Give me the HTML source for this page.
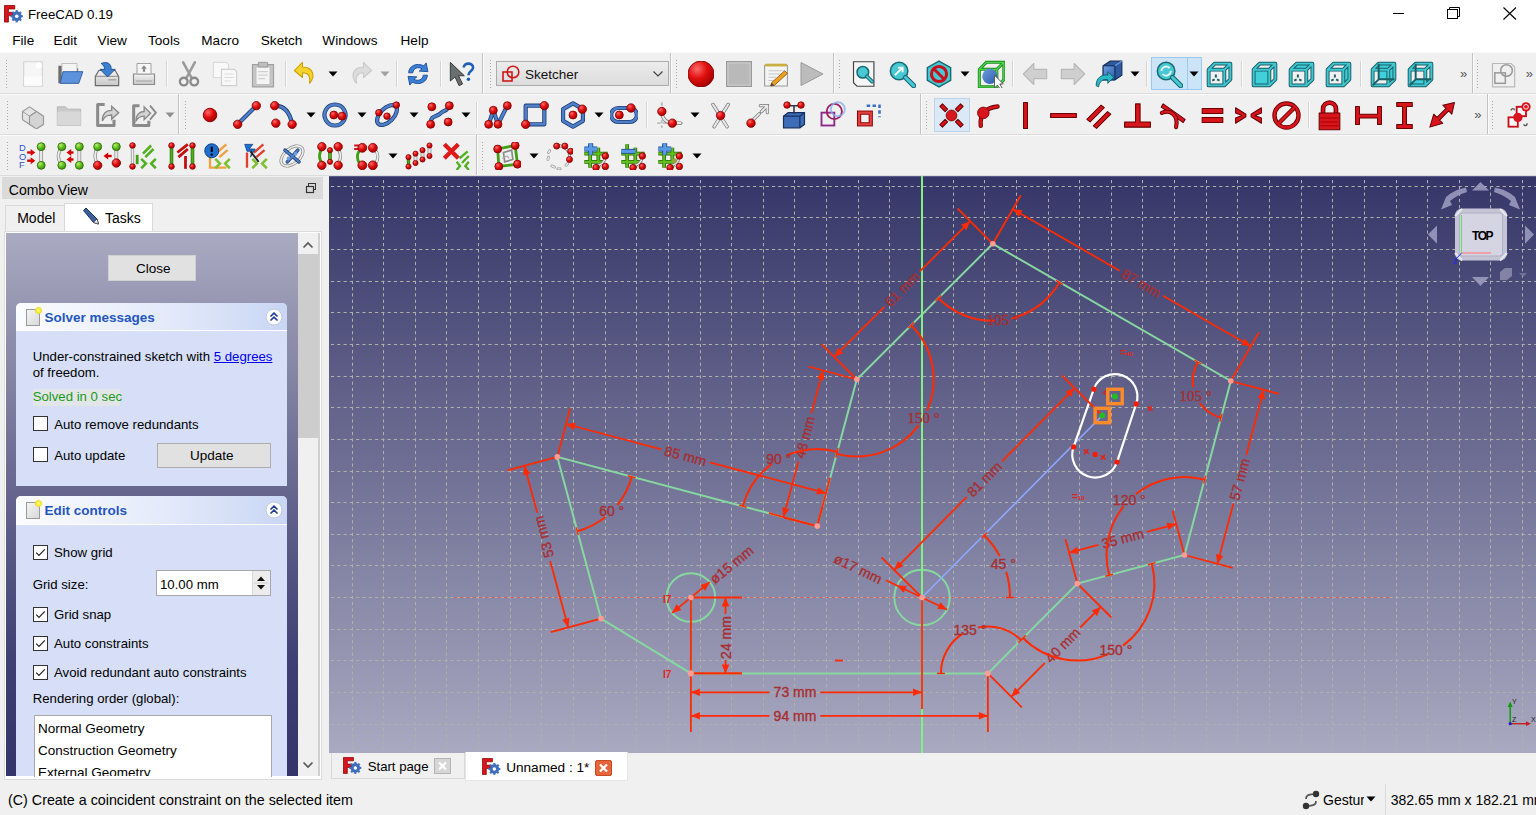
<!DOCTYPE html><html><head><meta charset="utf-8"><style>
*{margin:0;padding:0;box-sizing:border-box}
html,body{width:1536px;height:815px;overflow:hidden;background:#f0f0f0;font-family:"Liberation Sans",sans-serif}
.t{position:absolute;white-space:nowrap}
.ic{position:absolute}
</style></head><body><div style="position:absolute;left:0px;top:0px;width:1536px;height:52px;background:#fff"></div><div class="t" style="left:28px;top:7.94px;font-size:13.3px;line-height:13.3px;color:#000;font-weight:normal;font-family:'Liberation Sans', sans-serif;">FreeCAD 0.19</div><svg class="ic" style="left:4px;top:5px" width="19.6" height="17.6" viewBox="0 0 20 18"><path d="M0.5 0.5H11V4H4.5V7.5H9.5V11H4.5V17.5H0.5Z" fill="#d8141c" stroke="#8a0000" stroke-width="0.8"/><g transform="translate(13 11.5)"><circle r="4.6" fill="#3f6fc0" stroke="#1d3f78" stroke-width="0.6"/><path d="M-1.1 -6.3H1.1V6.3H-1.1Z" fill="#3f6fc0" transform="rotate(0)"/><path d="M-1.1 -6.3H1.1V6.3H-1.1Z" fill="#3f6fc0" transform="rotate(45)"/><path d="M-1.1 -6.3H1.1V6.3H-1.1Z" fill="#3f6fc0" transform="rotate(90)"/><path d="M-1.1 -6.3H1.1V6.3H-1.1Z" fill="#3f6fc0" transform="rotate(135)"/><circle r="1.8" fill="#fff"/></g></svg><div style="position:absolute;left:1393px;top:13px;width:11px;height:1px;background:#000"></div><svg class="ic" style="left:1446px;top:6px" width="15" height="14" viewBox="0 0 15 14"><path d="M3.5 3.5V1.5H13.5V10.5H11.5" fill="none" stroke="#000" stroke-width="1"/><rect x="1.5" y="3.5" width="10" height="9" fill="none" stroke="#000" stroke-width="1"/></svg><svg class="ic" style="left:1503px;top:7px" width="14" height="13" viewBox="0 0 14 13"><path d="M0.5 0.5L13 12.5M13 0.5L0.5 12.5" stroke="#000" stroke-width="1.1"/></svg><div class="t" style="left:12.3px;top:34.09px;font-size:13.6px;line-height:13.6px;color:#000;font-weight:normal;font-family:'Liberation Sans', sans-serif;">File</div><div class="t" style="left:53.6px;top:34.09px;font-size:13.6px;line-height:13.6px;color:#000;font-weight:normal;font-family:'Liberation Sans', sans-serif;">Edit</div><div class="t" style="left:97.6px;top:34.09px;font-size:13.6px;line-height:13.6px;color:#000;font-weight:normal;font-family:'Liberation Sans', sans-serif;">View</div><div class="t" style="left:148px;top:34.09px;font-size:13.6px;line-height:13.6px;color:#000;font-weight:normal;font-family:'Liberation Sans', sans-serif;">Tools</div><div class="t" style="left:201.3px;top:34.09px;font-size:13.6px;line-height:13.6px;color:#000;font-weight:normal;font-family:'Liberation Sans', sans-serif;">Macro</div><div class="t" style="left:260.8px;top:34.09px;font-size:13.6px;line-height:13.6px;color:#000;font-weight:normal;font-family:'Liberation Sans', sans-serif;">Sketch</div><div class="t" style="left:322.3px;top:34.09px;font-size:13.6px;line-height:13.6px;color:#000;font-weight:normal;font-family:'Liberation Sans', sans-serif;">Windows</div><div class="t" style="left:400.5px;top:34.09px;font-size:13.6px;line-height:13.6px;color:#000;font-weight:normal;font-family:'Liberation Sans', sans-serif;">Help</div><svg width="0" height="0" style="position:absolute"><defs>
<radialGradient id="rb" cx="0.35" cy="0.3" r="0.75"><stop offset="0" stop-color="#ff6a6a"/><stop offset="0.5" stop-color="#e01010"/><stop offset="1" stop-color="#a00000"/></radialGradient>
<radialGradient id="gb" cx="0.35" cy="0.3" r="0.75"><stop offset="0" stop-color="#b8f070"/><stop offset="0.5" stop-color="#62c020"/><stop offset="1" stop-color="#3a8a10"/></radialGradient>
<linearGradient id="gry" x1="0" y1="0" x2="0" y2="1"><stop offset="0" stop-color="#f2f2f2"/><stop offset="1" stop-color="#c8c8c8"/></linearGradient>
<linearGradient id="tl" x1="0" y1="0" x2="0" y2="1"><stop offset="0" stop-color="#6ee0e8"/><stop offset="1" stop-color="#22b0bc"/></linearGradient>
<linearGradient id="bl" x1="0" y1="0" x2="1" y2="1"><stop offset="0" stop-color="#6f9ee0"/><stop offset="1" stop-color="#2a5aa8"/></linearGradient>
</defs></svg><div style="position:absolute;left:0px;top:52px;width:1536px;height:124px;background:#f0f0f0"></div><div style="position:absolute;left:0px;top:52px;width:1536px;height:1px;background:#f8f8f8"></div><div style="position:absolute;left:0px;top:93px;width:1536px;height:1px;background:#dcdcdc"></div><div style="position:absolute;left:0px;top:94px;width:1536px;height:1px;background:#fbfbfb"></div><div style="position:absolute;left:0px;top:134px;width:1536px;height:1px;background:#dcdcdc"></div><div style="position:absolute;left:0px;top:135px;width:1536px;height:1px;background:#fbfbfb"></div><div style="position:absolute;left:0px;top:175px;width:1536px;height:1px;background:#dcdcdc"></div><svg class="ic" style="left:5.0px;top:59.0px" width="3" height="30" viewBox="0 0 3 30"><path d="M1.5 1V29" stroke="#a8a8a8" stroke-width="1" stroke-dasharray="1 2"/></svg><svg class="ic" style="left:18.6px;top:60.0px" width="28" height="28" viewBox="0 0 24 24"><path d="M4 1.5H20V22.5H4Z" fill="#f6f6f6" stroke="#d4d4d4" stroke-width="1"/><path d="M4.5 14H19.5V22H4.5Z" fill="#fcfcfc"/><circle cx="17" cy="4.8" r="2.6" fill="#fff"/></svg><svg class="ic" style="left:56.0px;top:60.0px" width="28" height="28" viewBox="0 0 24 24"><path d="M2 5H9L10 7H19V20H2Z" fill="#6e6e6e"/><path d="M5 3H18V14H5Z" fill="#f4f4f4" stroke="#aaa" stroke-width="0.6"/><path d="M3.5 20L6 10H23L19.5 20Z" fill="#5d92dc" stroke="#2f5fa8" stroke-width="0.8"/></svg><svg class="ic" style="left:93.4px;top:60.0px" width="28" height="28" viewBox="0 0 24 24"><path d="M2 14L5 9H19L22 14V22H2Z" fill="url(#gry)" stroke="#6a6a6a" stroke-width="1"/><path d="M2 14H22" stroke="#888" stroke-width="0.8"/><path d="M13 17H20" stroke="#999" stroke-width="1"/><path d="M7 3C12 1 16 3 15.5 8H19L12.5 14.5L6 8H10C10 6 9 4.5 7 3Z" fill="#3d7fd0" stroke="#1f4f90" stroke-width="0.8"/></svg><svg class="ic" style="left:130.2px;top:60.0px" width="28" height="28" viewBox="0 0 24 24"><path d="M3 12H21V21H3Z" fill="url(#gry)" stroke="#8a8a8a" stroke-width="1"/><path d="M6 3H18V12H6Z" fill="#f8f8f8" stroke="#9a9a9a" stroke-width="0.8"/><path d="M12 4.5L9.5 7.5H14.5Z M11 7.5H13V10H11Z" fill="#8a8a8a"/><path d="M5 18H19" stroke="#aaa" stroke-width="1"/></svg><svg class="ic" style="left:174.8px;top:60.0px" width="28" height="28" viewBox="0 0 24 24"><path d="M7 2L14 15M17 2L10 15" stroke="#9a9a9a" stroke-width="2.2" stroke-linecap="round"/><circle cx="7.5" cy="18.5" r="3.3" fill="none" stroke="#8a8a8a" stroke-width="2"/><circle cx="16.5" cy="18.5" r="3.3" fill="none" stroke="#8a8a8a" stroke-width="2"/></svg><svg class="ic" style="left:211.3px;top:60.0px" width="28" height="28" viewBox="0 0 24 24"><path d="M2 2H13L15 4V15H2Z" fill="#f8f8f8" stroke="#dadada" stroke-width="1"/><path d="M9 8H20L22 10V22H9Z" fill="#f8f8f8" stroke="#cfcfcf" stroke-width="1"/><path d="M11.5 12H19.5M11.5 15H19.5M11.5 18H17" stroke="#dcdcdc" stroke-width="1"/></svg><svg class="ic" style="left:249.0px;top:60.0px" width="28" height="28" viewBox="0 0 24 24"><path d="M3 4H21V23H3Z" fill="#c6c6c6" stroke="#a0a0a0" stroke-width="1"/><path d="M6 6H18V21H6Z" fill="#f4f4f4" stroke="#bdbdbd" stroke-width="0.8"/><path d="M8 2H16V6H8Z" fill="#bdbdbd" stroke="#9a9a9a" stroke-width="0.8"/><path d="M8 10H16M8 13H16M8 16H14" stroke="#cfcfcf" stroke-width="1"/></svg><svg class="ic" style="left:292.0px;top:60.0px" width="28" height="28" viewBox="0 0 24 24"><path d="M9 2L2 9L9 15V11C14 11 16 14 15 20C20 15 19 6 9 6Z" fill="#f6d22a" stroke="#c8a000" stroke-width="0.9" stroke-linejoin="round"/></svg><svg class="ic" style="left:345.7px;top:60.0px" width="28" height="28" viewBox="0 0 24 24"><path d="M15 2L22 9L15 15V11C10 11 8 14 9 20C4 15 5 6 15 6Z" fill="#dcdcdc" stroke="#c8c8c8" stroke-width="0.9" stroke-linejoin="round"/></svg><svg class="ic" style="left:404.3px;top:60.0px" width="28" height="28" viewBox="0 0 24 24"><path d="M4 11C4 5 11 2 17 5L19 2.5L20.5 10L13 9.5L15.5 7.5C12 5.5 8 7 7.5 11Z" fill="#3b80d8" stroke="#1d4f98" stroke-width="0.8"/><path d="M20 13C20 19 13 22 7 19L5 21.5L3.5 14L11 14.5L8.5 16.5C12 18.5 16 17 16.5 13Z" fill="#3b80d8" stroke="#1d4f98" stroke-width="0.8"/></svg><svg class="ic" style="left:447.6px;top:60.0px" width="28" height="28" viewBox="0 0 24 24"><path d="M2 2L2 18L6 14.5L9.5 22L12.5 20.5L9 13.5H14Z" fill="#6a7070" stroke="#333" stroke-width="0.8"/><path d="M13.5 6.5C13.5 2 21.5 2 21.5 6.5C21.5 9.5 17.5 9.5 17.5 13" fill="none" stroke="#1f5fb8" stroke-width="2.2"/><circle cx="17.5" cy="16.5" r="1.5" fill="#1f5fb8"/></svg><div style="position:absolute;left:166px;top:61.0px;width:1px;height:26px;background:#d4d4d4"></div><div style="position:absolute;left:167px;top:61.0px;width:1px;height:26px;background:#fbfbfb"></div><div style="position:absolute;left:285px;top:61.0px;width:1px;height:26px;background:#d4d4d4"></div><div style="position:absolute;left:286px;top:61.0px;width:1px;height:26px;background:#fbfbfb"></div><div style="position:absolute;left:396px;top:61.0px;width:1px;height:26px;background:#d4d4d4"></div><div style="position:absolute;left:397px;top:61.0px;width:1px;height:26px;background:#fbfbfb"></div><div style="position:absolute;left:440px;top:61.0px;width:1px;height:26px;background:#d4d4d4"></div><div style="position:absolute;left:441px;top:61.0px;width:1px;height:26px;background:#fbfbfb"></div><svg class="ic" style="left:327.7px;top:71.0px" width="10" height="6" viewBox="0 0 10 6"><path d="M0.5 0.5H9.5L5 5.5Z" fill="#000"/></svg><svg class="ic" style="left:380.0px;top:71.0px" width="10" height="6" viewBox="0 0 10 6"><path d="M0.5 0.5H9.5L5 5.5Z" fill="#a0a0a0"/></svg><div style="position:absolute;left:482px;top:53px;width:1px;height:40px;background:#c2c2c2"></div><div style="position:absolute;left:483px;top:53px;width:1px;height:40px;background:#fcfcfc"></div><svg class="ic" style="left:488.5px;top:59.0px" width="3" height="30" viewBox="0 0 3 30"><path d="M1.5 1V29" stroke="#a8a8a8" stroke-width="1" stroke-dasharray="1 2"/></svg><div style="position:absolute;left:496.3px;top:61.4px;width:172.5px;height:24.5px;background:linear-gradient(#ececec,#dcdcdc);border:1px solid #acacac"></div><svg class="ic" style="left:501px;top:64px" width="20" height="20" viewBox="0 0 20 20"><rect x="2" y="8" width="9" height="9" fill="none" stroke="#d01818" stroke-width="1.6"/><circle cx="12" cy="8" r="5.8" fill="none" stroke="#d01818" stroke-width="1.6"/></svg><div class="t" style="left:525px;top:67.77px;font-size:13.5px;line-height:13.5px;color:#111;font-weight:normal;font-family:'Liberation Sans', sans-serif;">Sketcher</div><svg class="ic" style="left:652px;top:70px" width="12" height="8" viewBox="0 0 12 8"><path d="M1.5 1.5L6 6L10.5 1.5" fill="none" stroke="#444" stroke-width="1.2"/></svg><div style="position:absolute;left:670px;top:53px;width:1px;height:40px;background:#c2c2c2"></div><div style="position:absolute;left:671px;top:53px;width:1px;height:40px;background:#fcfcfc"></div><svg class="ic" style="left:674.5px;top:59.0px" width="3" height="30" viewBox="0 0 3 30"><path d="M1.5 1V29" stroke="#a8a8a8" stroke-width="1" stroke-dasharray="1 2"/></svg><svg class="ic" style="left:688.4px;top:61.0px" width="26" height="26" viewBox="0 0 24 24"><circle cx="12" cy="12" r="12" fill="url(#rb)" stroke="#8a0000" stroke-width="0.8"/></svg><svg class="ic" style="left:725.8px;top:61.0px" width="26" height="26" viewBox="0 0 26 26"><rect x="0.5" y="0.5" width="25" height="25" fill="#b9b9b9" stroke="#9a9a9a" stroke-width="1"/><rect x="2" y="2" width="22" height="22" fill="none" stroke="#cbcbcb" stroke-width="1"/></svg><svg class="ic" style="left:763.2px;top:61.0px" width="26" height="26" viewBox="0 0 24 24"><path d="M1.5 4H22.5V23H1.5Z" fill="#f4f4f4" stroke="#9a9a9a" stroke-width="1"/><path d="M2 2.5H22V5H2Z" fill="#c8b040"/><path d="M5 9H19M5 12H17M5 15H12M5 18H10" stroke="#c8c8c8" stroke-width="1"/><path d="M8 20L20 9L22.5 11.5L10.5 22.5L7 23Z" fill="#f0a020" stroke="#8a5a10" stroke-width="0.8"/><path d="M8 20L7 23L10.5 22.5Z" fill="#444"/></svg><svg class="ic" style="left:799.0px;top:61.0px" width="26" height="26" viewBox="0 0 26 26"><path d="M2 1.5L24 13L2 24.5Z" fill="#bcbcbc" stroke="#9a9a9a" stroke-width="1" stroke-linejoin="round"/></svg><div style="position:absolute;left:833px;top:53px;width:1px;height:40px;background:#c2c2c2"></div><div style="position:absolute;left:834px;top:53px;width:1px;height:40px;background:#fcfcfc"></div><svg class="ic" style="left:838.2px;top:59.0px" width="3" height="30" viewBox="0 0 3 30"><path d="M1.5 1V29" stroke="#a8a8a8" stroke-width="1" stroke-dasharray="1 2"/></svg><svg class="ic" style="left:850.0px;top:60.0px" width="28" height="28" viewBox="0 0 24 24"><path d="M3 1.5H20.5V22.5H6L3 19.5Z" fill="#f6f6f6" stroke="#444" stroke-width="1"/><circle cx="11" cy="10.5" r="5" fill="#47c8d4" stroke="#1a6a72" stroke-width="1.3"/><path d="M14.5 14L19 18.5" stroke="#1a6a72" stroke-width="3.2" stroke-linecap="round"/><path d="M14.5 14L19 18.5" stroke="#47c8d4" stroke-width="1.6" stroke-linecap="round"/></svg><svg class="ic" style="left:887.5px;top:60.0px" width="28" height="28" viewBox="0 0 24 24"><circle cx="9.5" cy="9.5" r="7.5" fill="#47c8d4" stroke="#1a6a72" stroke-width="1.3"/><path d="M15 15L22 22" stroke="#1a6a72" stroke-width="4.5" stroke-linecap="round"/><path d="M15 15L22 22" stroke="#47c8d4" stroke-width="2.6" stroke-linecap="round"/><path d="M6 13L12 7M8.5 6.5H12.5V10.5" fill="none" stroke="#fff" stroke-width="1.6"/></svg><svg class="ic" style="left:925.0px;top:60.0px" width="28" height="28" viewBox="0 0 24 24"><path d="M12 1L22 6.5V17.5L12 23L2 17.5V6.5Z" fill="#47c8d4" stroke="#1a6a72" stroke-width="1.2"/><circle cx="12" cy="12" r="6.5" fill="none" stroke="#c8101a" stroke-width="2.6"/><path d="M7.5 7.5L16.5 16.5" stroke="#c8101a" stroke-width="2.6"/></svg><svg class="ic" style="left:976.7px;top:60.0px" width="28" height="28" viewBox="0 0 24 24"><path d="M2 8L8 2H23V17L17 23H2Z M2 8H17V23 M17 8L23 2" fill="none" stroke="#1d8a1d" stroke-width="2.6"/><path d="M2 8L8 2H23V17L17 23H2Z M2 8H17V23 M17 8L23 2" fill="none" stroke="#4cd24c" stroke-width="1.2"/><circle cx="11" cy="14" r="6.5" fill="url(#bl)"/><path d="M15 13V24L17.5 21.5L20 25L21.5 24L19.5 20.5H22.5Z" fill="#fff" stroke="#555" stroke-width="0.8"/></svg><svg class="ic" style="left:1021.0px;top:60.0px" width="28" height="28" viewBox="0 0 24 24"><path d="M2 12L11 3V8H22V16H11V21Z" fill="#cfcfcf" stroke="#b8b8b8" stroke-width="1" stroke-linejoin="round"/></svg><svg class="ic" style="left:1058.5px;top:60.0px" width="28" height="28" viewBox="0 0 24 24"><path d="M22 12L13 3V8H2V16H13V21Z" fill="#cfcfcf" stroke="#b8b8b8" stroke-width="1" stroke-linejoin="round"/></svg><svg class="ic" style="left:1095.0px;top:60.0px" width="28" height="28" viewBox="0 0 24 24"><path d="M7 5L13 1H23V13L17 17H7Z" fill="#2d5aa0" stroke="#13305e" stroke-width="1"/><path d="M7 5H17V17" fill="none" stroke="#13305e" stroke-width="1"/><path d="M17 5L23 1" stroke="#6a9ae0" stroke-width="1"/><path d="M7 5H17V17H7Z" fill="url(#bl)" stroke="#13305e" stroke-width="0.8"/><path d="M1 22C1 15 6 12 11 13V10L16 15L11 20V17C7 16 4 18 3 23Z" fill="#2ab8c8" stroke="#10606a" stroke-width="0.8"/></svg><svg class="ic" style="left:960.0px;top:71.0px" width="10" height="6" viewBox="0 0 10 6"><path d="M0.5 0.5H9.5L5 5.5Z" fill="#000"/></svg><svg class="ic" style="left:1130.0px;top:71.0px" width="10" height="6" viewBox="0 0 10 6"><path d="M0.5 0.5H9.5L5 5.5Z" fill="#000"/></svg><div style="position:absolute;left:1012px;top:61.0px;width:1px;height:26px;background:#d4d4d4"></div><div style="position:absolute;left:1013px;top:61.0px;width:1px;height:26px;background:#fbfbfb"></div><div style="position:absolute;left:1146px;top:61.0px;width:1px;height:26px;background:#d4d4d4"></div><div style="position:absolute;left:1147px;top:61.0px;width:1px;height:26px;background:#fbfbfb"></div><div style="position:absolute;left:1150.5px;top:57px;width:51.3px;height:33px;background:#cce4f7;border:1px solid #99c9ef"></div><div style="position:absolute;left:1187px;top:57px;width:1px;height:33px;background:#99c9ef"></div><svg class="ic" style="left:1154.8px;top:60.0px" width="28" height="28" viewBox="0 0 24 24"><circle cx="9.5" cy="9.5" r="7.5" fill="#47c8d4" stroke="#1a6a72" stroke-width="1.3"/><path d="M15 15L22 22" stroke="#1a6a72" stroke-width="4.5" stroke-linecap="round"/><path d="M15 15L22 22" stroke="#47c8d4" stroke-width="2.6" stroke-linecap="round"/><path d="M5.5 9.5A4 4 0 0 1 12.5 7M13.5 9.5A4 4 0 0 1 6.5 12" fill="none" stroke="#e8fafa" stroke-width="1.6"/></svg><svg class="ic" style="left:1189.3px;top:71.0px" width="10" height="6" viewBox="0 0 10 6"><path d="M0.5 0.5H9.5L5 5.5Z" fill="#000"/></svg><svg class="ic" style="left:1205.0px;top:59.5px" width="29" height="29" viewBox="0 0 24 24"><path d="M3 8L8 3L21 3L21 16L16 21L3 21Z M3 8L16 8L21 3 M16 8L16 21" fill="none" stroke="#1a5e66" stroke-width="3.2" stroke-linejoin="round"/><path d="M3 8L8 3L21 3L21 16L16 21L3 21Z M3 8L16 8L21 3 M16 8L16 21" fill="none" stroke="#40c8d2" stroke-width="1.6" stroke-linejoin="round"/><path d="M9 12v2.5M6 17l2-1M12 17l-2-1" stroke="#1a5e66" stroke-width="1.6"/></svg><svg class="ic" style="left:1250.0px;top:59.5px" width="29" height="29" viewBox="0 0 24 24"><path d="M3 8L16 8L16 21L3 21Z" fill="#3fd0da"/><path d="M3 8L8 3L21 3L21 16L16 21L3 21Z M3 8L16 8L21 3 M16 8L16 21" fill="none" stroke="#1a5e66" stroke-width="3.2" stroke-linejoin="round"/><path d="M3 8L8 3L21 3L21 16L16 21L3 21Z M3 8L16 8L21 3 M16 8L16 21" fill="none" stroke="#40c8d2" stroke-width="1.6" stroke-linejoin="round"/></svg><svg class="ic" style="left:1286.7px;top:59.5px" width="29" height="29" viewBox="0 0 24 24"><path d="M3 8L8 3L21 3L16 8Z" fill="#3fd0da"/><path d="M3 8L8 3L21 3L21 16L16 21L3 21Z M3 8L16 8L21 3 M16 8L16 21" fill="none" stroke="#1a5e66" stroke-width="3.2" stroke-linejoin="round"/><path d="M3 8L8 3L21 3L21 16L16 21L3 21Z M3 8L16 8L21 3 M16 8L16 21" fill="none" stroke="#40c8d2" stroke-width="1.6" stroke-linejoin="round"/><path d="M9 12v2.5M6 17l2-1M12 17l-2-1" stroke="#1a5e66" stroke-width="1.6"/></svg><svg class="ic" style="left:1324.2px;top:59.5px" width="29" height="29" viewBox="0 0 24 24"><path d="M16 8L21 3L21 16L16 21Z" fill="#3fd0da"/><path d="M3 8L8 3L21 3L21 16L16 21L3 21Z M3 8L16 8L21 3 M16 8L16 21" fill="none" stroke="#1a5e66" stroke-width="3.2" stroke-linejoin="round"/><path d="M3 8L8 3L21 3L21 16L16 21L3 21Z M3 8L16 8L21 3 M16 8L16 21" fill="none" stroke="#40c8d2" stroke-width="1.6" stroke-linejoin="round"/><path d="M9 12v2.5M6 17l2-1M12 17l-2-1" stroke="#1a5e66" stroke-width="1.6"/></svg><svg class="ic" style="left:1368.5px;top:59.5px" width="29" height="29" viewBox="0 0 24 24"><path d="M8 3L21 3L21 16L8 16Z" fill="#3fd0da"/><path d="M3 8L8 3L21 3L21 16L16 21L3 21Z M3 8L16 8L21 3 M16 8L16 21" fill="none" stroke="#1a5e66" stroke-width="3.2" stroke-linejoin="round"/><path d="M3 8L8 3L21 3L21 16L16 21L3 21Z M3 8L16 8L21 3 M16 8L16 21" fill="none" stroke="#40c8d2" stroke-width="1.6" stroke-linejoin="round"/><path d="M8 3L8 16L3 21 M8 16L21 16" fill="none" stroke="#1a5e66" stroke-width="1.6"/></svg><svg class="ic" style="left:1405.9px;top:59.5px" width="29" height="29" viewBox="0 0 24 24"><path d="M3 21L8 16L21 16L16 21Z" fill="#3fd0da"/><path d="M3 8L8 3L21 3L21 16L16 21L3 21Z M3 8L16 8L21 3 M16 8L16 21" fill="none" stroke="#1a5e66" stroke-width="3.2" stroke-linejoin="round"/><path d="M3 8L8 3L21 3L21 16L16 21L3 21Z M3 8L16 8L21 3 M16 8L16 21" fill="none" stroke="#40c8d2" stroke-width="1.6" stroke-linejoin="round"/><path d="M8 3L8 16L3 21 M8 16L21 16" fill="none" stroke="#1a5e66" stroke-width="1.6"/></svg><div style="position:absolute;left:1241px;top:61.0px;width:1px;height:26px;background:#d4d4d4"></div><div style="position:absolute;left:1242px;top:61.0px;width:1px;height:26px;background:#fbfbfb"></div><div style="position:absolute;left:1360px;top:61.0px;width:1px;height:26px;background:#d4d4d4"></div><div style="position:absolute;left:1361px;top:61.0px;width:1px;height:26px;background:#fbfbfb"></div><div class="t" style="left:1460px;top:67.00px;font-size:13px;line-height:13px;color:#555;font-weight:normal;font-family:'Liberation Sans', sans-serif;">»</div><div style="position:absolute;left:1472px;top:53px;width:1px;height:40px;background:#c2c2c2"></div><div style="position:absolute;left:1473px;top:53px;width:1px;height:40px;background:#fcfcfc"></div><svg class="ic" style="left:1475.9px;top:59.0px" width="3" height="30" viewBox="0 0 3 30"><path d="M1.5 1V29" stroke="#a8a8a8" stroke-width="1" stroke-dasharray="1 2"/></svg><svg class="ic" style="left:1489.0px;top:60.0px" width="28" height="28" viewBox="0 0 24 24"><path d="M3 3H19L22 6V23H3Z" fill="#f0f0f0" stroke="#b8b8b8" stroke-width="1"/><rect x="5" y="11" width="9" height="9" fill="none" stroke="#9a9a9a" stroke-width="1.3"/><circle cx="15" cy="9" r="5" fill="none" stroke="#9a9a9a" stroke-width="1.3"/></svg><div class="t" style="left:1525.7px;top:67.00px;font-size:13px;line-height:13px;color:#555;font-weight:normal;font-family:'Liberation Sans', sans-serif;">»</div><svg class="ic" style="left:5.7px;top:100.0px" width="3" height="30" viewBox="0 0 3 30"><path d="M1.5 1V29" stroke="#a8a8a8" stroke-width="1" stroke-dasharray="1 2"/></svg><svg class="ic" style="left:18.6px;top:101.0px" width="28" height="28" viewBox="0 0 24 24"><path d="M3 9L9 5L15 9V16L9 20L3 16Z" fill="#e4e4e4" stroke="#9a9a9a" stroke-width="1"/><path d="M9 13L15 9L21 13V20L15 24L9 20Z" fill="#d4d4d4" stroke="#9a9a9a" stroke-width="1"/><path d="M3 9L9 13V20M9 13L15 9" fill="none" stroke="#9a9a9a" stroke-width="0.8"/></svg><svg class="ic" style="left:55.0px;top:101.0px" width="28" height="28" viewBox="0 0 24 24"><path d="M2 5H9L11 7H22V21H2Z" fill="#cacaca" stroke="#b4b4b4" stroke-width="0.8"/><path d="M2 9H22V21H2Z" fill="#d8d8d8"/></svg><svg class="ic" style="left:92.8px;top:101.0px" width="28" height="28" viewBox="0 0 24 24"><path d="M10 3H4V21H18V16" fill="none" stroke="#8a8a8a" stroke-width="2.6" stroke-linejoin="round"/><path d="M8 17C8 10 12 8 16 8V4.5L22 10L16 15.5V12C12 12 10 13 8 17Z" fill="#d4d4d4" stroke="#8a8a8a" stroke-width="1.2"/></svg><svg class="ic" style="left:129.2px;top:101.0px" width="28" height="28" viewBox="0 0 24 24"><path d="M9 4H4V21H17V17" fill="none" stroke="#8a8a8a" stroke-width="2.6" stroke-linejoin="round"/><path d="M6 17C6 11 10 9 13 9V5L18.5 10.5L13 16V13C10 13 8 14 6 17Z" fill="#d4d4d4" stroke="#8a8a8a" stroke-width="1.2"/><path d="M18 4L23 10L18 16" fill="none" stroke="#8a8a8a" stroke-width="1.6"/></svg><svg class="ic" style="left:165.0px;top:112.0px" width="10" height="6" viewBox="0 0 10 6"><path d="M0.5 0.5H9.5L5 5.5Z" fill="#909090"/></svg><div style="position:absolute;left:178px;top:94px;width:1px;height:40px;background:#c2c2c2"></div><div style="position:absolute;left:179px;top:94px;width:1px;height:40px;background:#fcfcfc"></div><svg class="ic" style="left:183.5px;top:100.0px" width="3" height="30" viewBox="0 0 3 30"><path d="M1.5 1V29" stroke="#a8a8a8" stroke-width="1" stroke-dasharray="1 2"/></svg><svg class="ic" style="left:196.0px;top:101.0px" width="28" height="28" viewBox="0 0 24 24"><circle cx="12" cy="12" r="5.8" fill="url(#rb)" stroke="#8a0000" stroke-width="0.8"/></svg><svg class="ic" style="left:232.7px;top:101.0px" width="28" height="28" viewBox="0 0 24 24"><path d="M4 20L20 4" fill="none" stroke="#1d3f78" stroke-width="3.6" stroke-linecap="round" stroke-linejoin="round"/><path d="M4 20L20 4" fill="none" stroke="#4f7fc8" stroke-width="2.2" stroke-linecap="round" stroke-linejoin="round"/><circle cx="4" cy="20" r="3.6" fill="url(#rb)" stroke="#8a0000" stroke-width="0.7"/><circle cx="20" cy="4" r="3.6" fill="url(#rb)" stroke="#8a0000" stroke-width="0.7"/></svg><svg class="ic" style="left:270.2px;top:101.0px" width="28" height="28" viewBox="0 0 24 24"><path d="M4 4C12 4 17 9 19 20" fill="none" stroke="#1d3f78" stroke-width="3.6" stroke-linecap="round" stroke-linejoin="round"/><path d="M4 4C12 4 17 9 19 20" fill="none" stroke="#4f7fc8" stroke-width="2.2" stroke-linecap="round" stroke-linejoin="round"/><circle cx="4" cy="4" r="3.6" fill="url(#rb)" stroke="#8a0000" stroke-width="0.7"/><circle cx="19" cy="20" r="3.6" fill="url(#rb)" stroke="#8a0000" stroke-width="0.7"/><circle cx="5" cy="19" r="3.6" fill="url(#rb)" stroke="#8a0000" stroke-width="0.7"/></svg><svg class="ic" style="left:321.3px;top:101.0px" width="28" height="28" viewBox="0 0 24 24"><path d="M12 3A9 9 0 1 1 11.99 3Z" fill="none" stroke="#1d3f78" stroke-width="3.6" stroke-linecap="round" stroke-linejoin="round"/><path d="M12 3A9 9 0 1 1 11.99 3Z" fill="none" stroke="#4f7fc8" stroke-width="2.2" stroke-linecap="round" stroke-linejoin="round"/><circle cx="11" cy="12" r="3.4" fill="url(#rb)" stroke="#8a0000" stroke-width="0.7"/><circle cx="18" cy="13" r="3.4" fill="url(#rb)" stroke="#8a0000" stroke-width="0.7"/></svg><svg class="ic" style="left:373.4px;top:101.0px" width="28" height="28" viewBox="0 0 24 24"><g transform="rotate(-45 12 12)"><path d="M1.5 12A10.5 5.8 0 1 0 22.5 12A10.5 5.8 0 1 0 1.5 12Z" fill="none" stroke="#1d3f78" stroke-width="3.6" stroke-linecap="round" stroke-linejoin="round"/><path d="M1.5 12A10.5 5.8 0 1 0 22.5 12A10.5 5.8 0 1 0 1.5 12Z" fill="none" stroke="#4f7fc8" stroke-width="2.2" stroke-linecap="round" stroke-linejoin="round"/></g><circle cx="5" cy="10" r="2.8" fill="url(#rb)" stroke="#8a0000" stroke-width="0.7"/><circle cx="12" cy="13" r="2.8" fill="url(#rb)" stroke="#8a0000" stroke-width="0.7"/><circle cx="20" cy="3.5" r="2.8" fill="url(#rb)" stroke="#8a0000" stroke-width="0.7"/></svg><svg class="ic" style="left:425.5px;top:101.0px" width="28" height="28" viewBox="0 0 24 24"><path d="M4 19C4 12 9 14 12 11C15 8 18 9 20 4" fill="none" stroke="#1d3f78" stroke-width="3.6" stroke-linecap="round" stroke-linejoin="round"/><path d="M4 19C4 12 9 14 12 11C15 8 18 9 20 4" fill="none" stroke="#4f7fc8" stroke-width="2.2" stroke-linecap="round" stroke-linejoin="round"/><circle cx="5" cy="5" r="3.4" fill="url(#rb)" stroke="#8a0000" stroke-width="0.7"/><circle cx="20" cy="4" r="3.4" fill="url(#rb)" stroke="#8a0000" stroke-width="0.7"/><circle cx="4" cy="20" r="3.4" fill="url(#rb)" stroke="#8a0000" stroke-width="0.7"/><circle cx="19" cy="18" r="3.4" fill="url(#rb)" stroke="#8a0000" stroke-width="0.7"/></svg><svg class="ic" style="left:483.9px;top:101.0px" width="28" height="28" viewBox="0 0 24 24"><path d="M4 20L8 8L12 20L20 4" fill="none" stroke="#1d3f78" stroke-width="3.6" stroke-linecap="round" stroke-linejoin="round"/><path d="M4 20L8 8L12 20L20 4" fill="none" stroke="#4f7fc8" stroke-width="2.2" stroke-linecap="round" stroke-linejoin="round"/><circle cx="4" cy="20" r="3.4" fill="url(#rb)" stroke="#8a0000" stroke-width="0.7"/><circle cx="8" cy="8" r="3.4" fill="url(#rb)" stroke="#8a0000" stroke-width="0.7"/><circle cx="12" cy="20" r="3.4" fill="url(#rb)" stroke="#8a0000" stroke-width="0.7"/><circle cx="20" cy="4" r="3.4" fill="url(#rb)" stroke="#8a0000" stroke-width="0.7"/></svg><svg class="ic" style="left:521.3px;top:101.0px" width="28" height="28" viewBox="0 0 24 24"><path d="M4 4H20V20H4Z" fill="none" stroke="#1d3f78" stroke-width="3.6" stroke-linecap="round" stroke-linejoin="round"/><path d="M4 4H20V20H4Z" fill="none" stroke="#4f7fc8" stroke-width="2.2" stroke-linecap="round" stroke-linejoin="round"/><circle cx="4" cy="20" r="3.6" fill="url(#rb)" stroke="#8a0000" stroke-width="0.7"/><circle cx="20" cy="4" r="3.6" fill="url(#rb)" stroke="#8a0000" stroke-width="0.7"/></svg><svg class="ic" style="left:558.8px;top:101.0px" width="28" height="28" viewBox="0 0 24 24"><path d="M12 2L20.5 7V17L12 22L3.5 17V7Z" fill="none" stroke="#1d3f78" stroke-width="3.6" stroke-linecap="round" stroke-linejoin="round"/><path d="M12 2L20.5 7V17L12 22L3.5 17V7Z" fill="none" stroke="#4f7fc8" stroke-width="2.2" stroke-linecap="round" stroke-linejoin="round"/><circle cx="12" cy="12" r="3.4" fill="url(#rb)" stroke="#8a0000" stroke-width="0.7"/><circle cx="20" cy="7" r="3.6" fill="url(#rb)" stroke="#8a0000" stroke-width="0.7"/></svg><svg class="ic" style="left:610.2px;top:101.0px" width="28" height="28" viewBox="0 0 24 24"><path d="M7 6H17A6 6 0 0 1 17 18H7A6 6 0 0 1 7 6Z" fill="none" stroke="#1d3f78" stroke-width="3.6" stroke-linecap="round" stroke-linejoin="round"/><path d="M7 6H17A6 6 0 0 1 17 18H7A6 6 0 0 1 7 6Z" fill="none" stroke="#4f7fc8" stroke-width="2.2" stroke-linecap="round" stroke-linejoin="round"/><circle cx="8" cy="12" r="3.4" fill="url(#rb)" stroke="#8a0000" stroke-width="0.7"/><circle cx="18" cy="6" r="3.6" fill="url(#rb)" stroke="#8a0000" stroke-width="0.7"/></svg><svg class="ic" style="left:655.5px;top:101.0px" width="28" height="28" viewBox="0 0 24 24"><path d="M5 1V23M1 19H23" stroke="#bbb" stroke-width="1.6" stroke-dasharray="3 2"/><path d="M5 9C5 15 9 19 15 19H21" fill="none" stroke="#777" stroke-width="3.0" stroke-linecap="round"/><path d="M5 9C5 15 9 19 15 19H21" fill="none" stroke="#e8e8e8" stroke-width="1.8" stroke-linecap="round"/><circle cx="5" cy="9" r="3.6" fill="url(#rb)" stroke="#8a0000" stroke-width="0.7"/><circle cx="14" cy="19" r="3.6" fill="url(#rb)" stroke="#8a0000" stroke-width="0.7"/></svg><svg class="ic" style="left:706.2px;top:101.0px" width="28" height="28" viewBox="0 0 24 24"><path d="M6 3L18 22M19 3L7 22" fill="none" stroke="#777" stroke-width="3.0" stroke-linecap="round"/><path d="M6 3L18 22M19 3L7 22" fill="none" stroke="#e8e8e8" stroke-width="1.8" stroke-linecap="round"/><circle cx="12.5" cy="12.5" r="3.6" fill="url(#rb)" stroke="#8a0000" stroke-width="0.7"/></svg><svg class="ic" style="left:744.3px;top:101.0px" width="28" height="28" viewBox="0 0 24 24"><path d="M8 16L13 11M15 9L20 4M14 4H20V10" fill="none" stroke="#777" stroke-width="2.8" stroke-linecap="round"/><path d="M8 16L13 11M15 9L20 4M14 4H20V10" fill="none" stroke="#e8e8e8" stroke-width="1.6" stroke-linecap="round"/><circle cx="6" cy="19" r="3.6" fill="url(#rb)" stroke="#8a0000" stroke-width="0.7"/></svg><svg class="ic" style="left:780.1px;top:101.0px" width="28" height="28" viewBox="0 0 24 24"><path d="M3 13L7 10H21V20L17 23H3Z" fill="#3d6db8" stroke="#13305e" stroke-width="1"/><path d="M3 13H17V23M17 13L21 10" fill="none" stroke="#13305e" stroke-width="1"/><path d="M12 4V11M7 4H19" stroke="#334" stroke-width="1.3"/><circle cx="6" cy="3.5" r="2.8" fill="url(#rb)" stroke="#8a0000" stroke-width="0.7"/><circle cx="18" cy="3.5" r="2.8" fill="url(#rb)" stroke="#8a0000" stroke-width="0.7"/></svg><svg class="ic" style="left:817.6px;top:101.0px" width="28" height="28" viewBox="0 0 24 24"><rect x="3" y="10" width="11" height="11" fill="none" stroke="#8a2a8a" stroke-width="1.6"/><circle cx="14" cy="9" r="6.5" fill="none" stroke="#a02060" stroke-width="1.6"/><circle cx="17" cy="7" r="6" fill="none" stroke="#8ab0f0" stroke-width="1.6" opacity="0.8"/></svg><svg class="ic" style="left:855.0px;top:101.0px" width="28" height="28" viewBox="0 0 24 24"><path d="M10 4H21V14" fill="none" stroke="#3a70c8" stroke-width="2.2" stroke-dasharray="3 2"/><rect x="3.5" y="10" width="10" height="10" fill="none" stroke="#8a0000" stroke-width="3.6"/><rect x="3.5" y="10" width="10" height="10" fill="none" stroke="#e04040" stroke-width="2"/></svg><svg class="ic" style="left:305.9px;top:112.0px" width="10" height="6" viewBox="0 0 10 6"><path d="M0.5 0.5H9.5L5 5.5Z" fill="#000"/></svg><svg class="ic" style="left:357.0px;top:112.0px" width="10" height="6" viewBox="0 0 10 6"><path d="M0.5 0.5H9.5L5 5.5Z" fill="#000"/></svg><svg class="ic" style="left:409.0px;top:112.0px" width="10" height="6" viewBox="0 0 10 6"><path d="M0.5 0.5H9.5L5 5.5Z" fill="#000"/></svg><svg class="ic" style="left:461.0px;top:112.0px" width="10" height="6" viewBox="0 0 10 6"><path d="M0.5 0.5H9.5L5 5.5Z" fill="#000"/></svg><svg class="ic" style="left:593.8px;top:112.0px" width="10" height="6" viewBox="0 0 10 6"><path d="M0.5 0.5H9.5L5 5.5Z" fill="#000"/></svg><svg class="ic" style="left:689.8px;top:112.0px" width="10" height="6" viewBox="0 0 10 6"><path d="M0.5 0.5H9.5L5 5.5Z" fill="#000"/></svg><div style="position:absolute;left:476px;top:102.0px;width:1px;height:26px;background:#d4d4d4"></div><div style="position:absolute;left:477px;top:102.0px;width:1px;height:26px;background:#fbfbfb"></div><div style="position:absolute;left:646px;top:102.0px;width:1px;height:26px;background:#d4d4d4"></div><div style="position:absolute;left:647px;top:102.0px;width:1px;height:26px;background:#fbfbfb"></div><div style="position:absolute;left:920px;top:94px;width:1px;height:40px;background:#c2c2c2"></div><div style="position:absolute;left:921px;top:94px;width:1px;height:40px;background:#fcfcfc"></div><svg class="ic" style="left:924.5px;top:100.0px" width="3" height="30" viewBox="0 0 3 30"><path d="M1.5 1V29" stroke="#a8a8a8" stroke-width="1" stroke-dasharray="1 2"/></svg><div style="position:absolute;left:933.5px;top:98px;width:36.5px;height:34px;background:#dbe8f5;border:1px solid #b8d4ee"></div><svg class="ic" style="left:935.5px;top:99.5px" width="31" height="31" viewBox="0 0 24 24"><path d="M3 5L5 3L9 7L7 9Z M21 5L19 3L15 7L17 9Z M3 19L5 21L9 17L7 15Z M21 19L19 21L15 17L17 15Z" fill="#d8141c" stroke="#6a0000" stroke-width="0.8" stroke-linejoin="round"/><circle cx="12" cy="12" r="4.2" fill="#d8141c" stroke="#6a0000" stroke-width="0.6"/></svg><svg class="ic" style="left:972.5px;top:99.5px" width="31" height="31" viewBox="0 0 24 24"><path d="M6 20C5 10 10 6 19 5" fill="none" stroke="#6a0000" stroke-width="3.4" stroke-linecap="round"/><path d="M6 20C5 10 10 6 19 5" fill="none" stroke="#d8141c" stroke-width="2" stroke-linecap="round"/><circle cx="8" cy="10" r="4.5" fill="#d8141c" stroke="#6a0000" stroke-width="0.6"/></svg><svg class="ic" style="left:1010.1px;top:99.5px" width="31" height="31" viewBox="0 0 24 24"><path d="M10.5 2H13.5V22H10.5Z" fill="#d8141c" stroke="#6a0000" stroke-width="0.8" stroke-linejoin="round"/></svg><svg class="ic" style="left:1047.5px;top:99.5px" width="31" height="31" viewBox="0 0 24 24"><path d="M2 10.5H22V13.5H2Z" fill="#d8141c" stroke="#6a0000" stroke-width="0.8" stroke-linejoin="round"/></svg><svg class="ic" style="left:1083.2px;top:99.5px" width="31" height="31" viewBox="0 0 24 24"><path d="M3 15L14 4L16.5 6L5.5 17Z M8 20L19 9L21.5 11L10.5 22Z" fill="#d8141c" stroke="#6a0000" stroke-width="0.8" stroke-linejoin="round"/></svg><svg class="ic" style="left:1121.5px;top:99.5px" width="31" height="31" viewBox="0 0 24 24"><path d="M10.5 3H14V17H22V21H2V17H10.5Z" fill="#d8141c" stroke="#6a0000" stroke-width="0.8" stroke-linejoin="round"/></svg><svg class="ic" style="left:1158.2px;top:99.5px" width="31" height="31" viewBox="0 0 24 24"><path d="M4 3L21 15L19.5 17.5L2.5 5.5Z" fill="#d8141c" stroke="#6a0000" stroke-width="0.8" stroke-linejoin="round"/><path d="M3 10C10 7 16 12 14 21" fill="none" stroke="#6a0000" stroke-width="3.2" stroke-linecap="round"/><path d="M3 10C10 7 16 12 14 21" fill="none" stroke="#d8141c" stroke-width="1.8" stroke-linecap="round"/></svg><svg class="ic" style="left:1196.5px;top:99.5px" width="31" height="31" viewBox="0 0 24 24"><path d="M4 6.5H20V10.5H4Z M4 13.5H20V17.5H4Z" fill="#d8141c" stroke="#6a0000" stroke-width="0.8" stroke-linejoin="round"/></svg><svg class="ic" style="left:1233.2px;top:99.5px" width="31" height="31" viewBox="0 0 24 24"><path d="M2 6L10 11V13L2 18V14L7 12L2 10Z M22 6L14 11V13L22 18V14L17 12L22 10Z" fill="#d8141c" stroke="#6a0000" stroke-width="0.8" stroke-linejoin="round"/></svg><svg class="ic" style="left:1270.7px;top:99.5px" width="31" height="31" viewBox="0 0 24 24"><circle cx="12" cy="12" r="9.3" fill="none" stroke="#6a0000" stroke-width="3.4"/><circle cx="12" cy="12" r="9.3" fill="none" stroke="#d8141c" stroke-width="2"/><path d="M6 18L18 6" stroke="#6a0000" stroke-width="3.4"/><path d="M6 18L18 6" stroke="#d8141c" stroke-width="2"/></svg><svg class="ic" style="left:1313.8px;top:99.5px" width="31" height="31" viewBox="0 0 24 24"><path d="M7 11V7A5 5 0 0 1 17 7V11" fill="none" stroke="#6a0000" stroke-width="3.6"/><path d="M7 11V7A5 5 0 0 1 17 7V11" fill="none" stroke="#d8141c" stroke-width="2"/><path d="M4 10H20V23H4Z" fill="#d8141c" stroke="#6a0000" stroke-width="0.8" stroke-linejoin="round"/><path d="M5 14H19M5 17H19M5 20H19" stroke="#a00" stroke-width="0.8"/></svg><svg class="ic" style="left:1352.5px;top:99.5px" width="31" height="31" viewBox="0 0 24 24"><path d="M2 5H5V11H19V5H22V19H19V14H5V19H2Z" fill="#d8141c" stroke="#6a0000" stroke-width="0.8" stroke-linejoin="round"/></svg><svg class="ic" style="left:1388.8px;top:99.5px" width="31" height="31" viewBox="0 0 24 24"><path d="M6 2H18V5H13.5V19H18V22H6V19H10.5V5H6Z" fill="#d8141c" stroke="#6a0000" stroke-width="0.8" stroke-linejoin="round"/></svg><svg class="ic" style="left:1426.3px;top:99.5px" width="31" height="31" viewBox="0 0 24 24"><path d="M3 21L6 11L8.5 13.5L15.5 6.5L13 4L22 2L20 11L17.5 8.5L10.5 15.5L13 18Z" fill="#d8141c" stroke="#6a0000" stroke-width="0.8" stroke-linejoin="round"/></svg><div style="position:absolute;left:1308px;top:102.0px;width:1px;height:26px;background:#d4d4d4"></div><div style="position:absolute;left:1309px;top:102.0px;width:1px;height:26px;background:#fbfbfb"></div><div class="t" style="left:1474.3px;top:108.00px;font-size:13px;line-height:13px;color:#555;font-weight:normal;font-family:'Liberation Sans', sans-serif;">»</div><div style="position:absolute;left:1487px;top:94px;width:1px;height:40px;background:#c2c2c2"></div><div style="position:absolute;left:1488px;top:94px;width:1px;height:40px;background:#fcfcfc"></div><svg class="ic" style="left:1490.9px;top:100.0px" width="3" height="30" viewBox="0 0 3 30"><path d="M1.5 1V29" stroke="#a8a8a8" stroke-width="1" stroke-dasharray="1 2"/></svg><svg class="ic" style="left:1504.7px;top:101.0px" width="28" height="28" viewBox="0 0 24 24"><path d="M5 8C6 6 8 6 8 8" fill="none" stroke="#555" stroke-width="1.2"/><rect x="10" y="5" width="8" height="8" fill="#fff" stroke="#c8101a" stroke-width="1.6"/><circle cx="18" cy="5" r="4" fill="#d8141c"/><circle cx="18" cy="5" r="2" fill="none" stroke="#fff" stroke-width="0.8"/><rect x="3" y="14" width="8" height="8" fill="#fff" stroke="#c8101a" stroke-width="1.6"/><circle cx="11" cy="14" r="4" fill="#d8141c"/><path d="M16 20C17 22 19 21 19 19" fill="none" stroke="#555" stroke-width="1.2"/></svg><svg class="ic" style="left:5.5px;top:140.5px" width="3" height="30" viewBox="0 0 3 30"><path d="M1.5 1V29" stroke="#a8a8a8" stroke-width="1" stroke-dasharray="1 2"/></svg><svg class="ic" style="left:18.8px;top:141.5px" width="28" height="28" viewBox="0 0 24 24"><text x="0" y="7.5" font-family="Liberation Sans" font-size="8" fill="#3050d0">D</text><text x="0" y="15" font-family="Liberation Sans" font-size="8" fill="#3050d0">O</text><text x="0" y="22.5" font-family="Liberation Sans" font-size="8" fill="#3050d0">F</text><path d="M7 9H11" stroke="#c00" stroke-width="2"/><path d="M14 9L10 6V12Z" fill="#d00"/><path d="M7 16H11" stroke="#c00" stroke-width="2"/><path d="M14 16L10 13V19Z" fill="#d00"/><path d="M19 5V19" stroke="#888" stroke-width="3.2"/><path d="M19 5V19" stroke="#e8e8e8" stroke-width="2"/><circle cx="19" cy="4" r="3.4" fill="url(#gb)" stroke="#2a6a00" stroke-width="0.7"/><circle cx="19" cy="20" r="3.4" fill="url(#gb)" stroke="#2a6a00" stroke-width="0.7"/></svg><svg class="ic" style="left:56.3px;top:141.5px" width="28" height="28" viewBox="0 0 24 24"><path d="M5 5C1 9 1 15 5 19" fill="none" stroke="#888" stroke-width="2.8"/><path d="M5 5C1 9 1 15 5 19" fill="none" stroke="#eee" stroke-width="1.6"/><path d="M20 5V19" stroke="#888" stroke-width="3.2"/><path d="M20 5V19" stroke="#e8e8e8" stroke-width="2"/><path d="M15 9H12" stroke="#c00" stroke-width="2"/><path d="M9 9L13 6V12Z" fill="#d00"/><path d="M15 15H12" stroke="#c00" stroke-width="2"/><path d="M9 15L13 12V18Z" fill="#d00"/><circle cx="5" cy="4" r="3.4" fill="url(#gb)" stroke="#2a6a00" stroke-width="0.7"/><circle cx="5" cy="20" r="3.4" fill="url(#gb)" stroke="#2a6a00" stroke-width="0.7"/><circle cx="20" cy="4" r="3.4" fill="url(#gb)" stroke="#2a6a00" stroke-width="0.7"/><circle cx="20" cy="20" r="3.4" fill="url(#gb)" stroke="#2a6a00" stroke-width="0.7"/></svg><svg class="ic" style="left:92.6px;top:141.5px" width="28" height="28" viewBox="0 0 24 24"><path d="M4 5C1 9 1 15 4 19" fill="none" stroke="#888" stroke-width="2.8"/><path d="M4 5C1 9 1 15 4 19" fill="none" stroke="#eee" stroke-width="1.6"/><path d="M20 5V18" stroke="#888" stroke-width="3.2"/><path d="M20 5V18" stroke="#e8e8e8" stroke-width="2"/><path d="M16 12H12" stroke="#c00" stroke-width="2"/><path d="M9 12L13 9V15Z" fill="#d00"/><circle cx="4" cy="4" r="3.4" fill="url(#gb)" stroke="#2a6a00" stroke-width="0.7"/><circle cx="4" cy="20" r="3.6" fill="url(#rb)" stroke="#8a0000" stroke-width="0.7"/><circle cx="20" cy="4" r="3.4" fill="url(#gb)" stroke="#2a6a00" stroke-width="0.7"/><circle cx="20" cy="18" r="3.6" fill="url(#rb)" stroke="#8a0000" stroke-width="0.7"/></svg><svg class="ic" style="left:129.4px;top:141.5px" width="28" height="28" viewBox="0 0 24 24"><path d="M3 3V21" stroke="#888" stroke-width="2.8"/><path d="M3 3V21" stroke="#eee" stroke-width="1.6"/><circle cx="3" cy="3" r="2.4" fill="url(#rb)" stroke="#8a0000" stroke-width="0.7"/><circle cx="3" cy="21" r="2.4" fill="url(#rb)" stroke="#8a0000" stroke-width="0.7"/><path d="M7 11V19" stroke="#40a010" stroke-width="2.4"/><path d="M12 10L19 3M14 13L21 6" stroke="#50b020" stroke-width="2.2"/><path d="M10.5 14.5L14.5 18.5L10.5 22.5M23 14.5L19 18.5L23 22.5" fill="none" stroke="#50b020" stroke-width="2.2"/></svg><svg class="ic" style="left:167.6px;top:141.5px" width="28" height="28" viewBox="0 0 24 24"><path d="M3 3V21" stroke="#2a6a00" stroke-width="3.0"/><path d="M3 3V21" stroke="#50b020" stroke-width="1.8"/><circle cx="3" cy="3" r="2.4" fill="url(#rb)" stroke="#8a0000" stroke-width="0.7"/><circle cx="3" cy="21" r="2.4" fill="url(#rb)" stroke="#8a0000" stroke-width="0.7"/><path d="M21 3V21" stroke="#2a6a00" stroke-width="3.0"/><path d="M21 3V21" stroke="#50b020" stroke-width="1.8"/><circle cx="21" cy="3" r="2.4" fill="url(#rb)" stroke="#8a0000" stroke-width="0.7"/><circle cx="21" cy="21" r="2.4" fill="url(#rb)" stroke="#8a0000" stroke-width="0.7"/><path d="M8 9L17 2M9 13L17 6" stroke="#c01010" stroke-width="2.4"/><path d="M15 12V23" stroke="#c01010" stroke-width="2.4"/></svg><svg class="ic" style="left:202.8px;top:141.5px" width="28" height="28" viewBox="0 0 24 24"><path d="M6 10V22H20M12 9L20 2M14 13L21 7" fill="none" stroke="#f0a040" stroke-width="2"/><path d="M10.5 14.5L14.5 18.5L10.5 22.5M23 14.5L19 18.5L23 22.5" fill="none" stroke="#80c030" stroke-width="2.2"/><circle cx="7.5" cy="7.5" r="6" fill="#1f6fd0" stroke="#0a3a80" stroke-width="0.8"/><path d="M7.5 4V8.5" stroke="#000" stroke-width="1.8"/><circle cx="7.5" cy="10.8" r="1" fill="#000"/></svg><svg class="ic" style="left:240.3px;top:141.5px" width="28" height="28" viewBox="0 0 24 24"><path d="M6 9V22M12 9L20 2M14 13L21 7" fill="none" stroke="#e04030" stroke-width="2"/><path d="M10.5 14.5L14.5 18.5L10.5 22.5M23 14.5L19 18.5L23 22.5" fill="none" stroke="#80c030" stroke-width="2.2"/><path d="M4 2L11 2L8 6L13 6L9 13L10 8L6 8Z" fill="#1f6fd0" stroke="#0a3a80" stroke-width="0.6"/><path d="M9 8L16 17" stroke="#222" stroke-width="1.6"/></svg><svg class="ic" style="left:277.8px;top:141.5px" width="28" height="28" viewBox="0 0 24 24"><g transform="rotate(-40 12 12)"><ellipse cx="12" cy="12" rx="11" ry="6.5" fill="none" stroke="#888" stroke-width="2.6"/><ellipse cx="12" cy="12" rx="11" ry="6.5" fill="none" stroke="#eee" stroke-width="1.4"/></g><path d="M6 7L18 17M8 17L17 7" fill="none" stroke="#1d3f78" stroke-width="3.0" stroke-linecap="round" stroke-linejoin="round"/><path d="M6 7L18 17M8 17L17 7" fill="none" stroke="#4f7fc8" stroke-width="1.6" stroke-linecap="round" stroke-linejoin="round"/><circle cx="9" cy="14" r="1.6" fill="#6fa0e0"/><circle cx="15" cy="10" r="1.6" fill="#6fa0e0"/></svg><svg class="ic" style="left:316.4px;top:141.5px" width="28" height="28" viewBox="0 0 24 24"><path d="M6 5C2 9 2 15 6 19" fill="none" stroke="#40a010" stroke-width="2.4"/><path d="M18 5C22 9 22 15 18 19" fill="none" stroke="#888" stroke-width="2.6"/><path d="M18 5C22 9 22 15 18 19" fill="none" stroke="#eee" stroke-width="1.4"/><path d="M12 8V16" stroke="#2a6a00" stroke-width="3.0"/><path d="M12 8V16" stroke="#50b020" stroke-width="1.8"/><circle cx="5" cy="4" r="3.6" fill="url(#rb)" stroke="#8a0000" stroke-width="0.7"/><circle cx="5" cy="20" r="3.6" fill="url(#rb)" stroke="#8a0000" stroke-width="0.7"/><circle cx="19" cy="4" r="3.6" fill="url(#rb)" stroke="#8a0000" stroke-width="0.7"/><circle cx="19" cy="20" r="3.6" fill="url(#rb)" stroke="#8a0000" stroke-width="0.7"/><circle cx="12" cy="7" r="2.2" fill="url(#rb)" stroke="#8a0000" stroke-width="0.7"/><circle cx="12" cy="17" r="2.2" fill="url(#rb)" stroke="#8a0000" stroke-width="0.7"/></svg><svg class="ic" style="left:352.5px;top:141.5px" width="28" height="28" viewBox="0 0 24 24"><path d="M1 3H6M1 6H6" stroke="#d01020" stroke-width="1.8"/><path d="M6 7C3 10 3 15 6 19" fill="none" stroke="#40a010" stroke-width="2.4"/><path d="M19 7C22 10 22 15 19 19" fill="none" stroke="#888" stroke-width="2.6"/><path d="M19 7C22 10 22 15 19 19" fill="none" stroke="#eee" stroke-width="1.4"/><circle cx="8" cy="5" r="3.8" fill="url(#rb)" stroke="#8a0000" stroke-width="0.7"/><circle cx="8" cy="20" r="3.8" fill="url(#rb)" stroke="#8a0000" stroke-width="0.7"/><circle cx="17" cy="5" r="3.8" fill="url(#rb)" stroke="#8a0000" stroke-width="0.7"/><circle cx="17" cy="20" r="3.8" fill="url(#rb)" stroke="#8a0000" stroke-width="0.7"/></svg><svg class="ic" style="left:404.5px;top:141.5px" width="28" height="28" viewBox="0 0 24 24"><path d="M3 13V21" stroke="#2a6a00" stroke-width="2.8"/><path d="M3 13V21" stroke="#50b020" stroke-width="1.6"/><circle cx="3" cy="13" r="2.2" fill="url(#rb)" stroke="#8a0000" stroke-width="0.7"/><circle cx="3" cy="21" r="2.2" fill="url(#rb)" stroke="#8a0000" stroke-width="0.7"/><path d="M9 10V18" stroke="#888" stroke-width="3.2"/><path d="M9 10V18" stroke="#e8e8e8" stroke-width="2"/><circle cx="9" cy="10" r="2.2" fill="url(#rb)" stroke="#8a0000" stroke-width="0.7"/><circle cx="9" cy="18" r="2.2" fill="url(#rb)" stroke="#8a0000" stroke-width="0.7"/><path d="M15 7V15" stroke="#888" stroke-width="3.2"/><path d="M15 7V15" stroke="#e8e8e8" stroke-width="2"/><circle cx="15" cy="7" r="2.2" fill="url(#rb)" stroke="#8a0000" stroke-width="0.7"/><circle cx="15" cy="15" r="2.2" fill="url(#rb)" stroke="#8a0000" stroke-width="0.7"/><path d="M21 3V12" stroke="#888" stroke-width="3.2"/><path d="M21 3V12" stroke="#e8e8e8" stroke-width="2"/><circle cx="21" cy="3" r="2.2" fill="url(#rb)" stroke="#8a0000" stroke-width="0.7"/><circle cx="21" cy="12" r="2.2" fill="url(#rb)" stroke="#8a0000" stroke-width="0.7"/></svg><svg class="ic" style="left:442.3px;top:141.5px" width="28" height="28" viewBox="0 0 24 24"><path d="M2 2L14 14M14 2L2 14" stroke="#e01818" stroke-width="3.6"/><path d="M15 14L22 8M17 18L23 12M12.5 17L15.5 20.5L12.5 24M23 17L20 20.5L23 24" fill="none" stroke="#50b020" stroke-width="2"/></svg><svg class="ic" style="left:388.3px;top:152.5px" width="10" height="6" viewBox="0 0 10 6"><path d="M0.5 0.5H9.5L5 5.5Z" fill="#000"/></svg><div style="position:absolute;left:476px;top:135px;width:1px;height:40px;background:#c2c2c2"></div><div style="position:absolute;left:477px;top:135px;width:1px;height:40px;background:#fcfcfc"></div><svg class="ic" style="left:480.8px;top:140.5px" width="3" height="30" viewBox="0 0 3 30"><path d="M1.5 1V29" stroke="#a8a8a8" stroke-width="1" stroke-dasharray="1 2"/></svg><svg class="ic" style="left:493.0px;top:141.5px" width="28" height="28" viewBox="0 0 24 24"><path d="M4 6L19 3L21 19L5 21Z" fill="none" stroke="#40a010" stroke-width="2.4"/><path d="M9 9L16 7L17 15L10 17Z" fill="#f0f0f0" stroke="#888" stroke-width="1.4"/><path d="M8 14L12 12L14 14" fill="none" stroke="#aaa" stroke-width="1"/><circle cx="4" cy="6" r="3.4" fill="url(#rb)" stroke="#8a0000" stroke-width="0.7"/><circle cx="19" cy="3" r="3.4" fill="url(#rb)" stroke="#8a0000" stroke-width="0.7"/><circle cx="21" cy="19" r="3.4" fill="url(#rb)" stroke="#8a0000" stroke-width="0.7"/><circle cx="5" cy="21" r="3.4" fill="url(#rb)" stroke="#8a0000" stroke-width="0.7"/></svg><svg class="ic" style="left:545.2px;top:141.5px" width="28" height="28" viewBox="0 0 24 24"><g fill="none" stroke="#999" stroke-width="2.4" stroke-linecap="round"><path d="M3 9L4 7.5M2.5 15L3 13M6 20.5L8 21.5M11 23H13M18 20L19.5 18.5"/></g><g fill="none" stroke="#eee" stroke-width="1.2" stroke-linecap="round"><path d="M3 9L4 7.5M2.5 15L3 13M6 20.5L8 21.5M11 23H13M18 20L19.5 18.5"/></g><path d="M10 3C17 3 22 8 21 14" fill="none" stroke="#777" stroke-width="2.4" stroke-linecap="round"/><path d="M10 3C17 3 22 8 21 14" fill="none" stroke="#e8e8e8" stroke-width="1.2" stroke-linecap="round"/><circle cx="10" cy="3.5" r="2.6" fill="url(#rb)" stroke="#8a0000" stroke-width="0.7"/><circle cx="17" cy="3.5" r="2.6" fill="url(#rb)" stroke="#8a0000" stroke-width="0.7"/><circle cx="22" cy="8" r="2.6" fill="url(#rb)" stroke="#8a0000" stroke-width="0.7"/><circle cx="21" cy="15" r="2.6" fill="url(#rb)" stroke="#8a0000" stroke-width="0.7"/></svg><svg class="ic" style="left:581.6px;top:141.5px" width="28" height="28" viewBox="0 0 24 24"><path d="M7 2V22M14 5V22M2 10H22M2 17H18" stroke="#2a6a00" stroke-width="3.2"/><path d="M7 2V22M14 5V22M2 10H22M2 17H18" stroke="#60c020" stroke-width="1.8"/><path d="M12 20C16 20 19 18 20 13" fill="none" stroke="#777" stroke-width="2.4" stroke-linecap="round"/><path d="M12 20C16 20 19 18 20 13" fill="none" stroke="#e8e8e8" stroke-width="1.2" stroke-linecap="round"/><path d="M2 6H13M7.5 1V11" stroke="#1a4a90" stroke-width="4.2"/><path d="M2 6H13M7.5 1V11" stroke="#5a9ae8" stroke-width="2.8"/><circle cx="20" cy="12" r="2.8" fill="url(#rb)" stroke="#8a0000" stroke-width="0.7"/><circle cx="20" cy="21" r="2.8" fill="url(#rb)" stroke="#8a0000" stroke-width="0.7"/><circle cx="12" cy="22" r="2.8" fill="url(#rb)" stroke="#8a0000" stroke-width="0.7"/></svg><svg class="ic" style="left:619.4px;top:141.5px" width="28" height="28" viewBox="0 0 24 24"><path d="M7 2V22M14 5V22M2 10H22M2 17H18" stroke="#2a6a00" stroke-width="3.2"/><path d="M7 2V22M14 5V22M2 10H22M2 17H18" stroke="#60c020" stroke-width="1.8"/><path d="M12 20C16 20 19 18 20 13" fill="none" stroke="#777" stroke-width="2.4" stroke-linecap="round"/><path d="M12 20C16 20 19 18 20 13" fill="none" stroke="#e8e8e8" stroke-width="1.2" stroke-linecap="round"/><path d="M2 8H14" stroke="#1a4a90" stroke-width="4.2"/><path d="M2 8H14" stroke="#5a9ae8" stroke-width="2.8"/><circle cx="20" cy="12" r="2.8" fill="url(#rb)" stroke="#8a0000" stroke-width="0.7"/><circle cx="20" cy="21" r="2.8" fill="url(#rb)" stroke="#8a0000" stroke-width="0.7"/><circle cx="12" cy="22" r="2.8" fill="url(#rb)" stroke="#8a0000" stroke-width="0.7"/></svg><svg class="ic" style="left:655.8px;top:141.5px" width="28" height="28" viewBox="0 0 24 24"><path d="M7 2V22M14 5V22M2 10H22M2 17H18" stroke="#2a6a00" stroke-width="3.2"/><path d="M7 2V22M14 5V22M2 10H22M2 17H18" stroke="#60c020" stroke-width="1.8"/><path d="M12 20C16 20 19 18 20 13" fill="none" stroke="#777" stroke-width="2.4" stroke-linecap="round"/><path d="M12 20C16 20 19 18 20 13" fill="none" stroke="#e8e8e8" stroke-width="1.2" stroke-linecap="round"/><path d="M2 6H13M7.5 1V11" stroke="#1a4a90" stroke-width="4.2"/><path d="M2 6H13M7.5 1V11" stroke="#5a9ae8" stroke-width="2.8"/><circle cx="20" cy="12" r="2.8" fill="url(#rb)" stroke="#8a0000" stroke-width="0.7"/><circle cx="20" cy="21" r="2.8" fill="url(#rb)" stroke="#8a0000" stroke-width="0.7"/><circle cx="12" cy="22" r="2.8" fill="url(#rb)" stroke="#8a0000" stroke-width="0.7"/><circle cx="16" cy="16" r="2" fill="#a0a040"/></svg><svg class="ic" style="left:529.4px;top:152.5px" width="10" height="6" viewBox="0 0 10 6"><path d="M0.5 0.5H9.5L5 5.5Z" fill="#000"/></svg><svg class="ic" style="left:692.2px;top:152.5px" width="10" height="6" viewBox="0 0 10 6"><path d="M0.5 0.5H9.5L5 5.5Z" fill="#000"/></svg><div style="position:absolute;left:2px;top:177px;width:321px;height:22px;background:#dadada"></div><div class="t" style="left:8.8px;top:183.45px;font-size:14px;line-height:14px;color:#000;font-weight:normal;font-family:'Liberation Sans', sans-serif;">Combo View</div><svg class="ic" style="left:305px;top:182px" width="12" height="12" viewBox="0 0 12 12"><rect x="3.5" y="1.5" width="7" height="6" fill="none" stroke="#333" stroke-width="1"/><rect x="1.5" y="4.5" width="7" height="6" fill="#dadada" stroke="#333" stroke-width="1.2"/></svg><div style="position:absolute;left:5px;top:205px;width:60px;height:26px;background:#f0f0f0;border:1px solid #d9d9d9;border-bottom:none"></div><div style="position:absolute;left:64px;top:203px;width:89px;height:29px;background:#fff;border:1px solid #d9d9d9;border-bottom:none"></div><div class="t" style="left:17.2px;top:211.45px;font-size:14px;line-height:14px;color:#000;font-weight:normal;font-family:'Liberation Sans', sans-serif;">Model</div><div class="t" style="left:104.9px;top:211.45px;font-size:14px;line-height:14px;color:#000;font-weight:normal;font-family:'Liberation Sans', sans-serif;">Tasks</div><svg class="ic" style="left:81px;top:206px" width="20" height="20" viewBox="0 0 20 20"><path d="M2.5 4.5L5 2L16 13L17.5 18L12.5 16.5Z" fill="#3a5f9a" stroke="#1d3560" stroke-width="1"/><path d="M12.5 16.5L16 13L17.5 18Z" fill="#eee" stroke="#333" stroke-width="0.6"/></svg><div style="position:absolute;left:4px;top:231px;width:318px;height:549px;background:#fff;border:1px solid #dcdcdc"></div><div style="position:absolute;left:6px;top:233px;width:292px;height:543px;background:linear-gradient(#aaaac2 0%,#8d8dab 20%,#62628c 50%,#3e3e72 80%,#34346a 100%)"></div><div style="position:absolute;left:298px;top:233px;width:20px;height:543px;background:#f0f0f0"></div><div style="position:absolute;left:298px;top:254px;width:20px;height:184px;background:#cdcdcd"></div><svg class="ic" style="left:300px;top:238px" width="16" height="14" viewBox="0 0 16 14"><path d="M3.5 9.5L8 5L12.5 9.5" fill="none" stroke="#555" stroke-width="1.6"/></svg><svg class="ic" style="left:300px;top:758px" width="16" height="14" viewBox="0 0 16 14"><path d="M3.5 4.5L8 9L12.5 4.5" fill="none" stroke="#555" stroke-width="1.6"/></svg><div style="position:absolute;left:318px;top:233px;width:2px;height:543px;background:#d0d0d0"></div><div style="position:absolute;left:108px;top:255px;width:88px;height:26px;background:#e1e1e1;border:1px solid #d0d0d0"></div><div class="t" style="left:136px;top:261.97px;font-size:13.5px;line-height:13.5px;color:#000;font-weight:normal;font-family:'Liberation Sans', sans-serif;">Close</div><div style="position:absolute;left:16px;top:303px;width:271px;height:183px;background:#d6dff7;border-radius:5px 5px 0 0"></div><div style="position:absolute;left:16px;top:303px;width:271px;height:28px;background:linear-gradient(90deg,#fbfcff 0%,#e4eafa 55%,#c9d6f4 100%);border-radius:5px 5px 0 0;border-bottom:1px solid #fff"></div><div style="position:absolute;left:25.5px;top:308.5px;width:14px;height:17px;background:linear-gradient(135deg,#f4f4f4,#d8d8d8);border:1px solid #9a9a9a"></div><div style="position:absolute;left:35px;top:306.5px;width:7px;height:7px;border-radius:50%;background:radial-gradient(#ffff80,#f0e020 60%,rgba(240,230,0,0) 100%)"></div><div class="t" style="left:44.5px;top:311.27px;font-size:13.5px;line-height:13.5px;color:#2456c2;font-weight:bold;font-family:'Liberation Sans', sans-serif;">Solver messages</div><svg class="ic" style="left:265px;top:308px" width="18" height="18" viewBox="0 0 18 18"><circle cx="9" cy="9" r="8" fill="#fff" stroke="#c0c8e0" stroke-width="1"/><path d="M5.5 8.5L9 5.2L12.5 8.5M5.5 12.5L9 9.2L12.5 12.5" fill="none" stroke="#1a3c9a" stroke-width="1.6"/></svg><div class="t" style="left:32.7px;top:349.63px;font-size:13.2px;line-height:13.2px;color:#000;font-weight:normal;font-family:'Liberation Sans', sans-serif;">Under-constrained sketch with <span style="color:#0000ee;text-decoration:underline">5 degrees</span></div><div class="t" style="left:32.7px;top:365.93px;font-size:13.2px;line-height:13.2px;color:#000;font-weight:normal;font-family:'Liberation Sans', sans-serif;">of freedom.</div><div style="position:absolute;left:32.7px;top:389px;width:87.3px;height:17px;background:#e3e6e8"></div><div class="t" style="left:32.7px;top:390.43px;font-size:13.2px;line-height:13.2px;color:#1a9a1a;font-weight:normal;font-family:'Liberation Sans', sans-serif;">Solved in 0 sec</div><div style="position:absolute;left:33px;top:415.5px;width:15px;height:15px;background:#fff;border:1px solid #333"></div><div class="t" style="left:54.2px;top:417.73px;font-size:13.2px;line-height:13.2px;color:#000;font-weight:normal;font-family:'Liberation Sans', sans-serif;">Auto remove redundants</div><div style="position:absolute;left:33px;top:446.7px;width:15px;height:15px;background:#fff;border:1px solid #333"></div><div class="t" style="left:54.2px;top:449.03px;font-size:13.2px;line-height:13.2px;color:#000;font-weight:normal;font-family:'Liberation Sans', sans-serif;">Auto update</div><div style="position:absolute;left:157px;top:443px;width:114px;height:25px;background:#e1e1e1;border:1px solid #adadad"></div><div class="t" style="left:190px;top:449.07px;font-size:13.5px;line-height:13.5px;color:#000;font-weight:normal;font-family:'Liberation Sans', sans-serif;">Update</div><div style="position:absolute;left:16px;top:496px;width:271px;height:280px;background:#d6dff7;border-radius:5px 5px 0 0"></div><div style="position:absolute;left:16px;top:496px;width:271px;height:29px;background:linear-gradient(90deg,#fbfcff 0%,#e4eafa 55%,#c9d6f4 100%);border-radius:5px 5px 0 0;border-bottom:1px solid #fff"></div><div style="position:absolute;left:25.5px;top:501.5px;width:14px;height:17px;background:linear-gradient(135deg,#f4f4f4,#d8d8d8);border:1px solid #9a9a9a"></div><div style="position:absolute;left:35px;top:499.5px;width:7px;height:7px;border-radius:50%;background:radial-gradient(#ffff80,#f0e020 60%,rgba(240,230,0,0) 100%)"></div><div class="t" style="left:44.5px;top:504.27px;font-size:13.5px;line-height:13.5px;color:#2456c2;font-weight:bold;font-family:'Liberation Sans', sans-serif;">Edit controls</div><svg class="ic" style="left:265px;top:501px" width="18" height="18" viewBox="0 0 18 18"><circle cx="9" cy="9" r="8" fill="#fff" stroke="#c0c8e0" stroke-width="1"/><path d="M5.5 8.5L9 5.2L12.5 8.5M5.5 12.5L9 9.2L12.5 12.5" fill="none" stroke="#1a3c9a" stroke-width="1.6"/></svg><div style="position:absolute;left:33px;top:544.5px;width:15px;height:15px;background:#fff;border:1px solid #333"></div><svg class="ic" style="left:33px;top:544.5px" width="15" height="15" viewBox="0 0 15 15"><path d="M3.2 7.6L6 10.4L11.8 4.4" fill="none" stroke="#222" stroke-width="1.2"/></svg><div class="t" style="left:54px;top:545.83px;font-size:13.2px;line-height:13.2px;color:#000;font-weight:normal;font-family:'Liberation Sans', sans-serif;">Show grid</div><div class="t" style="left:32.7px;top:577.53px;font-size:13.2px;line-height:13.2px;color:#000;font-weight:normal;font-family:'Liberation Sans', sans-serif;">Grid size:</div><div style="position:absolute;left:156px;top:570px;width:115px;height:26px;background:#fff;border:1px solid #a8a8a8"></div><div style="position:absolute;left:252px;top:571px;width:18px;height:24px;background:#ececec;border-left:1px solid #d8d8d8"></div><svg class="ic" style="left:253px;top:572px" width="16" height="22" viewBox="0 0 16 22"><path d="M4 9L8 4.5L12 9Z M4 13L8 17.5L12 13Z" fill="#111"/><line x1="1" y1="11" x2="15" y2="11" stroke="#d0d0d0"/></svg><div class="t" style="left:160px;top:578.03px;font-size:13.2px;line-height:13.2px;color:#000;font-weight:normal;font-family:'Liberation Sans', sans-serif;">10.00 mm</div><div style="position:absolute;left:33px;top:607px;width:15px;height:15px;background:#fff;border:1px solid #333"></div><svg class="ic" style="left:33px;top:607px" width="15" height="15" viewBox="0 0 15 15"><path d="M3.2 7.6L6 10.4L11.8 4.4" fill="none" stroke="#222" stroke-width="1.2"/></svg><div class="t" style="left:54px;top:608.43px;font-size:13.2px;line-height:13.2px;color:#000;font-weight:normal;font-family:'Liberation Sans', sans-serif;">Grid snap</div><div style="position:absolute;left:33px;top:636px;width:15px;height:15px;background:#fff;border:1px solid #333"></div><svg class="ic" style="left:33px;top:636px" width="15" height="15" viewBox="0 0 15 15"><path d="M3.2 7.6L6 10.4L11.8 4.4" fill="none" stroke="#222" stroke-width="1.2"/></svg><div class="t" style="left:54px;top:637.13px;font-size:13.2px;line-height:13.2px;color:#000;font-weight:normal;font-family:'Liberation Sans', sans-serif;">Auto constraints</div><div style="position:absolute;left:33px;top:664.5px;width:15px;height:15px;background:#fff;border:1px solid #333"></div><svg class="ic" style="left:33px;top:664.5px" width="15" height="15" viewBox="0 0 15 15"><path d="M3.2 7.6L6 10.4L11.8 4.4" fill="none" stroke="#222" stroke-width="1.2"/></svg><div class="t" style="left:54px;top:665.83px;font-size:13.2px;line-height:13.2px;color:#000;font-weight:normal;font-family:'Liberation Sans', sans-serif;">Avoid redundant auto constraints</div><div class="t" style="left:32.7px;top:692.33px;font-size:13.2px;line-height:13.2px;color:#000;font-weight:normal;font-family:'Liberation Sans', sans-serif;">Rendering order (global):</div><div style="position:absolute;left:33.5px;top:714.5px;width:238px;height:62px;background:#fff;border:1px solid #a8a8a8;border-bottom:none"></div><div style="position:absolute;left:34px;top:716px;width:236px;height:60px;overflow:hidden"><div class="t" style="left:4px;top:6.07px;font-size:13.5px;line-height:13.5px;color:#000;font-weight:normal;font-family:'Liberation Sans', sans-serif;">Normal Geometry</div><div class="t" style="left:4px;top:28.07px;font-size:13.5px;line-height:13.5px;color:#000;font-weight:normal;font-family:'Liberation Sans', sans-serif;">Construction Geometry</div><div class="t" style="left:4px;top:50.07px;font-size:13.5px;line-height:13.5px;color:#000;font-weight:normal;font-family:'Liberation Sans', sans-serif;">External Geometry</div></div><svg class="ic" style="left:329px;top:176px" width="1207" height="577" viewBox="329 176 1207 577"><defs><linearGradient id="vbg" x1="0" y1="0" x2="0" y2="1"><stop offset="0" stop-color="#353568"/><stop offset="1" stop-color="#a9a9c1"/></linearGradient></defs><rect x="329" y="176" width="1207" height="577" fill="url(#vbg)"/><rect x="329" y="176" width="1207" height="1" fill="#5c5c8a"/><path d="M352.5 178V753M383.5 178V753M415.5 178V753M446.5 178V753M478.5 178V753M510.5 178V753M541.5 178V753M573.5 178V753M605.5 178V753M636.5 178V753M668.5 178V753M700.5 178V753M731.5 178V753M763.5 178V753M794.5 178V753M826.5 178V753M858.5 178V753M889.5 178V753M921.5 178V753M953.5 178V753M984.5 178V753M1016.5 178V753M1048.5 178V753M1079.5 178V753M1111.5 178V753M1142.5 178V753M1174.5 178V753M1206.5 178V753M1237.5 178V753M1269.5 178V753M1301.5 178V753M1332.5 178V753M1364.5 178V753M1396.5 178V753M1427.5 178V753M1459.5 178V753M1490.5 178V753M1522.5 178V753" stroke="#b0b0aa" stroke-width="1" stroke-dasharray="3.2 3.1" stroke-dashoffset="4.3" fill="none"/><path d="M329 186.5H1536M329 217.5H1536M329 249.5H1536M329 281.5H1536M329 312.5H1536M329 344.5H1536M329 376.5H1536M329 407.5H1536M329 439.5H1536M329 471.5H1536M329 502.5H1536M329 534.5H1536M329 565.5H1536M329 597.5H1536M329 629.5H1536M329 660.5H1536M329 692.5H1536M329 724.5H1536" stroke="#b0b0aa" stroke-width="1" stroke-dasharray="3.2 3.1" stroke-dashoffset="4.4" fill="none"/><line x1="452" y1="597.5" x2="1391" y2="597.5" stroke="#dc5c5c" stroke-width="1" stroke-dasharray="3.2 3.1" stroke-dashoffset="4.55"/><path d="M992.8 243.8 L856.8 379.5 L817.2 526.1 L557.3 456.9 L601.0 618.6 L690.9 673.4 L987.9 673.4 L1077.4 583.6 L1184.5 555.0 L1230.8 381.0 L992.8 243.8" fill="none" stroke="#86d8a0" stroke-width="2"/><circle cx="690.9" cy="597.5" r="24.3" fill="none" stroke="#86d8a0" stroke-width="2"/><circle cx="922" cy="597.5" r="27.7" fill="none" stroke="#86d8a0" stroke-width="2"/><line x1="922" y1="597.5" x2="1102.3" y2="415.5" stroke="#8fa8ff" stroke-width="1.6"/><path d="M1093.8 389.2A22.4 22.4 0 0 1 1136.2 403.9L1117 462.1A22.4 22.4 0 0 1 1073.6 446.9Z" fill="none" stroke="#fff" stroke-width="2.2"/><line x1="922" y1="176" x2="922" y2="753" stroke="#80f080" stroke-width="2"/><line x1="783.9" y1="517.6" x2="817.2" y2="526.1" stroke="#ff2a00" stroke-width="1.8" /><line x1="817.2" y1="526.1" x2="822.5" y2="506.3" stroke="#ff2a00" stroke-width="1.8" /><line x1="690.9" y1="673.4" x2="742.0" y2="673.4" stroke="#ff2a00" stroke-width="1.8" /><line x1="992.8" y1="243.8" x2="957.5" y2="208.4" stroke="#ff2a00" stroke-width="1.8" /><line x1="856.8" y1="379.5" x2="821.5" y2="344.1" stroke="#ff2a00" stroke-width="1.8" /><line x1="970.2" y1="221.1" x2="919.9" y2="271.3" stroke="#ff2a00" stroke-width="1.8" /><line x1="884.5" y1="306.7" x2="834.2" y2="356.8" stroke="#ff2a00" stroke-width="1.8" /><polygon points="970.2,221.1 966.5,230.2 961.1,224.8" fill="#ff2a00"/><polygon points="834.2,356.8 837.9,347.8 843.3,353.2" fill="#ff2a00"/><text x="902.2" y="289.0" transform="rotate(-44.9 902.2 289.0)" font-family="Liberation Sans" font-size="14" fill="#a82e30" text-anchor="middle" dominant-baseline="central" stroke="#a82e30" stroke-width="0.35">61 mm</text><line x1="992.8" y1="243.8" x2="1020.8" y2="195.3" stroke="#ff2a00" stroke-width="1.8" /><line x1="1230.8" y1="381.0" x2="1258.8" y2="332.5" stroke="#ff2a00" stroke-width="1.8" /><line x1="1012.8" y1="209.1" x2="1119.6" y2="270.7" stroke="#ff2a00" stroke-width="1.8" /><line x1="1163.0" y1="295.7" x2="1250.8" y2="346.3" stroke="#ff2a00" stroke-width="1.8" /><polygon points="1012.8,209.1 1022.5,210.3 1018.7,216.9" fill="#ff2a00"/><polygon points="1250.8,346.3 1241.1,345.1 1244.9,338.6" fill="#ff2a00"/><text x="1141.3" y="283.2" transform="rotate(30.0 1141.3 283.2)" font-family="Liberation Sans" font-size="14" fill="#a82e30" text-anchor="middle" dominant-baseline="central" stroke="#a82e30" stroke-width="0.35">87 mm</text><line x1="1230.8" y1="381.0" x2="1279.1" y2="393.9" stroke="#ff2a00" stroke-width="1.8" /><line x1="1184.5" y1="555.0" x2="1232.8" y2="567.9" stroke="#ff2a00" stroke-width="1.8" /><line x1="1263.7" y1="389.7" x2="1246.2" y2="455.2" stroke="#ff2a00" stroke-width="1.8" /><line x1="1233.4" y1="503.5" x2="1217.4" y2="563.7" stroke="#ff2a00" stroke-width="1.8" /><polygon points="1263.7,389.7 1265.0,399.4 1257.7,397.5" fill="#ff2a00"/><polygon points="1217.4,563.7 1216.0,554.1 1223.3,556.0" fill="#ff2a00"/><text x="1239.8" y="479.4" transform="rotate(-75.1 1239.8 479.4)" font-family="Liberation Sans" font-size="14" fill="#a82e30" text-anchor="middle" dominant-baseline="central" stroke="#a82e30" stroke-width="0.35">57 mm</text><line x1="1077.4" y1="583.6" x2="1065.5" y2="539.2" stroke="#ff2a00" stroke-width="1.8" /><line x1="1184.5" y1="555.0" x2="1172.6" y2="510.6" stroke="#ff2a00" stroke-width="1.8" /><line x1="1069.1" y1="552.7" x2="1098.5" y2="544.8" stroke="#ff2a00" stroke-width="1.8" /><line x1="1146.8" y1="531.9" x2="1176.2" y2="524.1" stroke="#ff2a00" stroke-width="1.8" /><polygon points="1069.1,552.7 1076.9,546.7 1078.8,554.0" fill="#ff2a00"/><polygon points="1176.2,524.1 1168.5,530.1 1166.6,522.7" fill="#ff2a00"/><text x="1122.7" y="538.4" transform="rotate(-15.0 1122.7 538.4)" font-family="Liberation Sans" font-size="14" fill="#a82e30" text-anchor="middle" dominant-baseline="central" stroke="#a82e30" stroke-width="0.35">35 mm</text><line x1="987.9" y1="673.4" x2="1021.9" y2="707.3" stroke="#ff2a00" stroke-width="1.8" /><line x1="1077.4" y1="583.6" x2="1111.4" y2="617.5" stroke="#ff2a00" stroke-width="1.8" /><line x1="1011.3" y1="696.7" x2="1044.9" y2="662.9" stroke="#ff2a00" stroke-width="1.8" /><line x1="1080.2" y1="627.5" x2="1100.8" y2="606.9" stroke="#ff2a00" stroke-width="1.8" /><polygon points="1011.3,696.7 1014.9,687.6 1020.3,693.0" fill="#ff2a00"/><polygon points="1100.8,606.9 1097.1,616.0 1091.7,610.6" fill="#ff2a00"/><text x="1062.6" y="645.2" transform="rotate(-45.1 1062.6 645.2)" font-family="Liberation Sans" font-size="14" fill="#a82e30" text-anchor="middle" dominant-baseline="central" stroke="#a82e30" stroke-width="0.35">40 mm</text><line x1="557.3" y1="456.9" x2="507.1" y2="470.5" stroke="#ff2a00" stroke-width="1.8" /><line x1="601.0" y1="618.6" x2="550.8" y2="632.2" stroke="#ff2a00" stroke-width="1.8" /><line x1="524.5" y1="465.8" x2="537.2" y2="512.8" stroke="#ff2a00" stroke-width="1.8" /><line x1="550.2" y1="561.1" x2="568.2" y2="627.5" stroke="#ff2a00" stroke-width="1.8" /><polygon points="524.5,465.8 530.5,473.5 523.2,475.5" fill="#ff2a00"/><polygon points="568.2,627.5 562.2,619.8 569.5,617.8" fill="#ff2a00"/><text x="543.7" y="536.9" transform="rotate(-105.0 543.7 536.9)" font-family="Liberation Sans" font-size="14" fill="#a82e30" text-anchor="middle" dominant-baseline="central" stroke="#a82e30" stroke-width="0.35">53 mm</text><line x1="557.3" y1="456.9" x2="570.2" y2="408.6" stroke="#ff2a00" stroke-width="1.8" /><line x1="817.2" y1="526.1" x2="830.1" y2="477.8" stroke="#ff2a00" stroke-width="1.8" /><line x1="566.0" y1="424.0" x2="661.4" y2="449.4" stroke="#ff2a00" stroke-width="1.8" /><line x1="709.8" y1="462.3" x2="825.9" y2="493.2" stroke="#ff2a00" stroke-width="1.8" /><polygon points="566.0,424.0 575.7,422.7 573.8,430.0" fill="#ff2a00"/><polygon points="825.9,493.2 816.3,494.6 818.2,487.3" fill="#ff2a00"/><text x="685.6" y="455.9" transform="rotate(14.9 685.6 455.9)" font-family="Liberation Sans" font-size="14" fill="#a82e30" text-anchor="middle" dominant-baseline="central" stroke="#a82e30" stroke-width="0.35">85 mm</text><line x1="817.2" y1="526.1" x2="768.9" y2="513.1" stroke="#ff2a00" stroke-width="1.8" /><line x1="856.8" y1="379.5" x2="808.5" y2="366.5" stroke="#ff2a00" stroke-width="1.8" /><line x1="783.4" y1="517.0" x2="798.4" y2="461.5" stroke="#ff2a00" stroke-width="1.8" /><line x1="811.4" y1="413.2" x2="823.0" y2="370.4" stroke="#ff2a00" stroke-width="1.8" /><polygon points="783.4,517.0 782.1,507.3 789.4,509.3" fill="#ff2a00"/><polygon points="823.0,370.4 824.3,380.1 817.0,378.1" fill="#ff2a00"/><text x="804.9" y="437.4" transform="rotate(-74.9 804.9 437.4)" font-family="Liberation Sans" font-size="14" fill="#a82e30" text-anchor="middle" dominant-baseline="central" stroke="#a82e30" stroke-width="0.35">48 mm</text><line x1="922.0" y1="597.5" x2="881.5" y2="557.4" stroke="#ff2a00" stroke-width="1.8" /><line x1="1102.3" y1="415.5" x2="1061.8" y2="375.4" stroke="#ff2a00" stroke-width="1.8" /><line x1="894.3" y1="570.1" x2="966.8" y2="496.8" stroke="#ff2a00" stroke-width="1.8" /><line x1="1002.0" y1="461.3" x2="1074.6" y2="388.1" stroke="#ff2a00" stroke-width="1.8" /><polygon points="894.3,570.1 897.9,561.0 903.3,566.3" fill="#ff2a00"/><polygon points="1074.6,388.1 1071.0,397.1 1065.6,391.8" fill="#ff2a00"/><text x="984.4" y="479.1" transform="rotate(-45.3 984.4 479.1)" font-family="Liberation Sans" font-size="14" fill="#a82e30" text-anchor="middle" dominant-baseline="central" stroke="#a82e30" stroke-width="0.35">81 mm</text><path d="M1059.5 282.3A77 77 0 0 1 1011.2 318.6" fill="none" stroke="#ff2a00" stroke-width="2"/><path d="M994.4 320.8A77 77 0 0 1 938.4 298.2" fill="none" stroke="#ff2a00" stroke-width="2"/><line x1="1056.0" y1="280.3" x2="1062.9" y2="284.3" stroke="#ff2a00" stroke-width="1.4" /><line x1="941.2" y1="295.4" x2="935.5" y2="301.1" stroke="#ff2a00" stroke-width="1.4" /><text x="1002.9" y="320.1" transform="rotate(0.0 1002.9 320.1)" font-family="Liberation Serif" font-size="15" fill="#a82e30" text-anchor="middle" dominant-baseline="central" stroke="#a82e30" stroke-width="0.35">105 °</text><path d="M1221.0 417.7A38 38 0 0 1 1199.8 403.0" fill="none" stroke="#ff2a00" stroke-width="2"/><path d="M1193.3 387.4A38 38 0 0 1 1197.9 362.0" fill="none" stroke="#ff2a00" stroke-width="2"/><line x1="1222.0" y1="413.8" x2="1219.9" y2="421.6" stroke="#ff2a00" stroke-width="1.4" /><line x1="1201.4" y1="364.0" x2="1194.4" y2="360.0" stroke="#ff2a00" stroke-width="1.4" /><text x="1195.7" y="395.5" transform="rotate(0.0 1195.7 395.5)" font-family="Liberation Serif" font-size="15" fill="#a82e30" text-anchor="middle" dominant-baseline="central" stroke="#a82e30" stroke-width="0.35">105 °</text><path d="M1109.2 575.2A78 78 0 0 1 1123.7 506.2" fill="none" stroke="#ff2a00" stroke-width="2"/><path d="M1135.7 494.2A78 78 0 0 1 1204.7 479.7" fill="none" stroke="#ff2a00" stroke-width="2"/><line x1="1113.0" y1="574.2" x2="1105.3" y2="576.2" stroke="#ff2a00" stroke-width="1.4" /><line x1="1203.7" y1="483.5" x2="1205.7" y2="475.8" stroke="#ff2a00" stroke-width="1.4" /><text x="1129.3" y="499.8" transform="rotate(0.0 1129.3 499.8)" font-family="Liberation Sans" font-size="14" fill="#a82e30" text-anchor="middle" dominant-baseline="central" stroke="#a82e30" stroke-width="0.35">120 °</text><path d="M1151.8 563.7A77 77 0 0 1 1123.0 645.6" fill="none" stroke="#ff2a00" stroke-width="2"/><path d="M1108.3 654.1A77 77 0 0 1 1023.0 638.0" fill="none" stroke="#ff2a00" stroke-width="2"/><line x1="1147.9" y1="564.7" x2="1155.6" y2="562.6" stroke="#ff2a00" stroke-width="1.4" /><line x1="1025.8" y1="635.2" x2="1020.1" y2="640.9" stroke="#ff2a00" stroke-width="1.4" /><text x="1115.9" y="650.3" transform="rotate(0.0 1115.9 650.3)" font-family="Liberation Sans" font-size="14" fill="#a82e30" text-anchor="middle" dominant-baseline="central" stroke="#a82e30" stroke-width="0.35">150 °</text><path d="M940.9 673.4A47 47 0 0 1 962.4 633.9" fill="none" stroke="#ff2a00" stroke-width="2"/><path d="M978.0 627.5A47 47 0 0 1 1021.1 640.2" fill="none" stroke="#ff2a00" stroke-width="2"/><line x1="944.9" y1="673.4" x2="936.9" y2="673.4" stroke="#ff2a00" stroke-width="1.4" /><line x1="1018.3" y1="643.0" x2="1024.0" y2="637.3" stroke="#ff2a00" stroke-width="1.4" /><text x="969.9" y="630.0" transform="rotate(0.0 969.9 630.0)" font-family="Liberation Sans" font-size="14" fill="#a82e30" text-anchor="middle" dominant-baseline="central" stroke="#a82e30" stroke-width="0.35">135 °</text><path d="M984.2 535.3A88 88 0 0 1 999.7 556.1" fill="none" stroke="#ff2a00" stroke-width="2"/><path d="M1006.2 571.8A88 88 0 0 1 1010.0 597.5" fill="none" stroke="#ff2a00" stroke-width="2"/><line x1="981.4" y1="538.1" x2="987.1" y2="532.4" stroke="#ff2a00" stroke-width="1.4" /><line x1="1006.0" y1="597.5" x2="1014.0" y2="597.5" stroke="#ff2a00" stroke-width="1.4" /><text x="1003.3" y="563.8" transform="rotate(0.0 1003.3 563.8)" font-family="Liberation Sans" font-size="14" fill="#a82e30" text-anchor="middle" dominant-baseline="central" stroke="#a82e30" stroke-width="0.35">45 °</text><path d="M911.2 325.1A77 77 0 0 1 927.3 410.4" fill="none" stroke="#ff2a00" stroke-width="2"/><path d="M918.8 425.1A77 77 0 0 1 836.9 453.9" fill="none" stroke="#ff2a00" stroke-width="2"/><line x1="908.4" y1="327.9" x2="914.1" y2="322.2" stroke="#ff2a00" stroke-width="1.4" /><line x1="837.9" y1="450.0" x2="835.8" y2="457.7" stroke="#ff2a00" stroke-width="1.4" /><text x="923.5" y="418.0" transform="rotate(0.0 923.5 418.0)" font-family="Liberation Serif" font-size="15" fill="#a82e30" text-anchor="middle" dominant-baseline="central" stroke="#a82e30" stroke-width="0.35">150 °</text><path d="M631.7 476.8A77 77 0 0 1 617.4 505.0" fill="none" stroke="#ff2a00" stroke-width="2"/><path d="M605.4 517.0A77 77 0 0 1 577.2 531.3" fill="none" stroke="#ff2a00" stroke-width="2"/><line x1="627.8" y1="475.8" x2="635.5" y2="477.9" stroke="#ff2a00" stroke-width="1.4" /><line x1="576.2" y1="527.4" x2="578.3" y2="535.1" stroke="#ff2a00" stroke-width="1.4" /><text x="611.7" y="511.3" transform="rotate(0.0 611.7 511.3)" font-family="Liberation Sans" font-size="14" fill="#a82e30" text-anchor="middle" dominant-baseline="central" stroke="#a82e30" stroke-width="0.35">60 °</text><path d="M742.8 506.2A77 77 0 0 1 771.6 464.1" fill="none" stroke="#ff2a00" stroke-width="2"/><path d="M786.3 455.6A77 77 0 0 1 837.1 451.7" fill="none" stroke="#ff2a00" stroke-width="2"/><line x1="746.7" y1="507.2" x2="739.0" y2="505.1" stroke="#ff2a00" stroke-width="1.4" /><line x1="836.1" y1="455.6" x2="838.2" y2="447.9" stroke="#ff2a00" stroke-width="1.4" /><text x="778.7" y="459.4" transform="rotate(0.0 778.7 459.4)" font-family="Liberation Sans" font-size="14" fill="#a82e30" text-anchor="middle" dominant-baseline="central" stroke="#a82e30" stroke-width="0.35">90 °</text><line x1="885.9" y1="580.2" x2="947.0" y2="609.5" stroke="#ff2a00" stroke-width="1.8" /><polygon points="897.0,585.5 906.8,586.0 903.5,592.8" fill="#ff2a00"/><polygon points="947.0,609.5 937.2,609.0 940.5,602.2" fill="#ff2a00"/><text x="858.0" y="568.6" transform="rotate(25.6 858.0 568.6)" font-family="Liberation Sans" font-size="14" fill="#a82e30" text-anchor="middle" dominant-baseline="central" stroke="#a82e30" stroke-width="0.35">ø17 mm</text><line x1="672.1" y1="612.9" x2="709.7" y2="582.1" stroke="#ff2a00" stroke-width="1.8" /><polygon points="672.1,612.9 676.6,604.2 681.4,610.1" fill="#ff2a00"/><polygon points="709.7,582.1 705.2,590.8 700.4,584.9" fill="#ff2a00"/><text x="731.5" y="564.5" transform="rotate(-39.2 731.5 564.5)" font-family="Liberation Sans" font-size="14" fill="#a82e30" text-anchor="middle" dominant-baseline="central" stroke="#a82e30" stroke-width="0.35">ø15 mm</text><line x1="690.9" y1="597.5" x2="742.0" y2="597.5" stroke="#ff2a00" stroke-width="1.8" /><line x1="690.9" y1="673.4" x2="742.0" y2="673.4" stroke="#ff2a00" stroke-width="1.8" /><line x1="725.5" y1="597.5" x2="725.5" y2="614.0" stroke="#ff2a00" stroke-width="1.8" /><line x1="725.5" y1="660.0" x2="725.5" y2="673.4" stroke="#ff2a00" stroke-width="1.8" /><polygon points="725.5,597.5 729.3,606.5 721.7,606.5" fill="#ff2a00"/><polygon points="725.5,673.4 721.7,664.4 729.3,664.4" fill="#ff2a00"/><text x="725.5" y="637.5" transform="rotate(-90.0 725.5 637.5)" font-family="Liberation Sans" font-size="14" fill="#a82e30" text-anchor="middle" dominant-baseline="central" stroke="#a82e30" stroke-width="0.35">24 mm</text><line x1="690.9" y1="597.5" x2="690.9" y2="732.0" stroke="#ff2a00" stroke-width="1.8" /><line x1="922.0" y1="597.5" x2="922.0" y2="709.0" stroke="#ff2a00" stroke-width="1.8" /><line x1="987.9" y1="673.4" x2="987.9" y2="732.0" stroke="#ff2a00" stroke-width="1.8" /><line x1="690.9" y1="692.3" x2="769.5" y2="692.3" stroke="#ff2a00" stroke-width="1.8" /><line x1="820.3" y1="692.3" x2="922.0" y2="692.3" stroke="#ff2a00" stroke-width="1.8" /><polygon points="690.9,692.3 699.9,688.5 699.9,696.1" fill="#ff2a00"/><polygon points="922.0,692.3 913.0,696.1 913.0,688.5" fill="#ff2a00"/><text x="795.0" y="692.3" transform="rotate(0.0 795.0 692.3)" font-family="Liberation Sans" font-size="14" fill="#a82e30" text-anchor="middle" dominant-baseline="central" stroke="#a82e30" stroke-width="0.35">73 mm</text><line x1="690.9" y1="715.8" x2="769.5" y2="715.8" stroke="#ff2a00" stroke-width="1.8" /><line x1="820.3" y1="715.8" x2="987.9" y2="715.8" stroke="#ff2a00" stroke-width="1.8" /><polygon points="690.9,715.8 699.9,712.0 699.9,719.6" fill="#ff2a00"/><polygon points="987.9,715.8 978.9,719.6 978.9,712.0" fill="#ff2a00"/><text x="795.0" y="715.8" transform="rotate(0.0 795.0 715.8)" font-family="Liberation Sans" font-size="14" fill="#a82e30" text-anchor="middle" dominant-baseline="central" stroke="#a82e30" stroke-width="0.35">94 mm</text><text x="663" y="603" font-family="Liberation Sans" font-size="10" font-weight="bold" fill="#e0241a">I7</text><text x="663" y="678" font-family="Liberation Sans" font-size="10" font-weight="bold" fill="#e0241a">I7</text><line x1="835.0" y1="660.5" x2="843.0" y2="660.5" stroke="#ff2a00" stroke-width="1.8" /><path d="M1147.5 406.6L1152.5 410.6M1148 411.1L1152 406.1" stroke="#e0241a" stroke-width="1.6"/><path d="M1083.8 449.7L1088.8 453.7M1084.3 454.2L1088.3 449.2" stroke="#e0241a" stroke-width="1.6"/><path d="M1100.5 455.3L1105.5 459.3M1101 459.8L1105 454.8" stroke="#e0241a" stroke-width="1.6"/><path d="M1107 390L1103.5 393L1107 395" fill="none" stroke="#e0241a" stroke-width="1.4"/><text x="1120" y="356" font-family="Liberation Sans" font-size="10" font-weight="bold" fill="#e0241a">=<tspan font-size="6">40</tspan></text><text x="1072" y="500" font-family="Liberation Sans" font-size="10" font-weight="bold" fill="#e0241a">=<tspan font-size="6">10</tspan></text><circle cx="992.8" cy="243.8" r="2.8" fill="#ff9c94"/><circle cx="856.8" cy="379.5" r="2.8" fill="#ff9c94"/><circle cx="817.2" cy="526.1" r="2.8" fill="#ff9c94"/><circle cx="557.3" cy="456.9" r="2.8" fill="#ff9c94"/><circle cx="601" cy="618.6" r="2.8" fill="#ff9c94"/><circle cx="690.9" cy="673.4" r="2.8" fill="#ff9c94"/><circle cx="987.9" cy="673.4" r="2.8" fill="#ff9c94"/><circle cx="1077.4" cy="583.6" r="2.8" fill="#ff9c94"/><circle cx="1184.5" cy="555" r="2.8" fill="#ff9c94"/><circle cx="1230.8" cy="381" r="2.8" fill="#ff9c94"/><circle cx="690.9" cy="673.4" r="2.8" fill="#ff9c94"/><circle cx="690.9" cy="597.5" r="2.8" fill="#ff9c94"/><circle cx="922" cy="597.5" r="2.8" fill="#ff9c94"/><circle cx="1093.8" cy="389.2" r="2.6" fill="#ff1a00"/><circle cx="1136.2" cy="403.9" r="2.6" fill="#ff1a00"/><circle cx="1073.6" cy="446.9" r="2.6" fill="#ff1a00"/><circle cx="1117" cy="462.1" r="2.6" fill="#ff1a00"/><circle cx="1095.2" cy="454.4" r="2.6" fill="#ff1a00"/><rect x="1107.8" y="389.3" width="14.4" height="14.4" fill="none" stroke="#ff8a2a" stroke-width="3.4"/><circle cx="1115" cy="396.5" r="3" fill="#22bb22"/><rect x="1095.1" y="408.3" width="14.4" height="14.4" fill="none" stroke="#ff8a2a" stroke-width="3.4"/><circle cx="1102.3" cy="415.5" r="3" fill="#22bb22"/><g opacity="0.85"><path d="M1472 190.5L1480.5 182L1489 190.5Z" fill="#a0a0c4"/><path d="M1472 277L1480.5 286L1489 277Z" fill="#a0a0c4"/><path d="M1437 225.5L1428 234.6L1437 243.7Z" fill="#a0a0c4"/><path d="M1525 225.5L1534 234.6L1525 243.7Z" fill="#a0a0c4"/><path d="M1441 209.5L1446 197C1452 192 1458 189 1466 187.5L1467 192C1460 194 1455 197 1450 201L1452 205Z" fill="#a0a0c4"/><path d="M1520 209.5L1515 197C1509 192 1503 189 1495 187.5L1494 192C1501 194 1506 197 1511 201L1509 205Z" fill="#a0a0c4"/><path d="M1500 272L1505 268H1512V276L1507 280H1500Z" fill="#8e8eae"/><path d="M1519 273H1527L1523 277Z" fill="#7a7a9a"/></g><rect x="1455" y="208.5" width="52" height="52" rx="7" fill="#c4c4d6"/><rect x="1459.5" y="213" width="43" height="43" rx="3" fill="#d4d4e2" stroke="#b0b0c4" stroke-width="1"/><path d="M1455 216L1462 209M1507 216L1500 209M1455 253L1462 260.5M1507 253L1500 260.5" stroke="#e8e8f0" stroke-width="2"/><text x="1482" y="239.5" font-family="Liberation Sans" font-size="12" font-weight="bold" fill="#000" text-anchor="middle" letter-spacing="-1.5">TOP</text><path d="M1461.5 253V215" stroke="#60e060" stroke-width="1"/><path d="M1461.5 253H1491" stroke="#ff8080" stroke-width="1.2"/><path d="M1461.5 253L1455 260" stroke="#2020ff" stroke-width="1"/><text x="1453" y="264" font-family="Liberation Sans" font-size="7" fill="#2020ff">Z</text><path d="M1510.2 723.7V705" stroke="#00a000" stroke-width="1.4"/><path d="M1507.8 707L1510.2 701.5L1512.6 707Z" fill="#00a000"/><path d="M1510.2 723.7H1528" stroke="#c02020" stroke-width="1.4"/><path d="M1526 721.3L1531 723.7L1526 726.1Z" fill="#c02020"/><circle cx="1510.2" cy="723.7" r="1.6" fill="#2020c0"/><text x="1512" y="704" font-family="Liberation Sans" font-size="7" fill="#222">Y</text><text x="1512" y="722" font-family="Liberation Sans" font-size="7" fill="#222">Z</text><text x="1531" y="722" font-family="Liberation Sans" font-size="7" fill="#222">X</text></svg><div style="position:absolute;left:331px;top:753px;width:134px;height:26px;background:#f0f0f0;border:1px solid #d9d9d9;border-top:none"></div><div style="position:absolute;left:465px;top:752px;width:163px;height:29px;background:#fff;border:1px solid #e5e5e5;border-top:none"></div><div class="t" style="left:367.7px;top:760.13px;font-size:13.2px;line-height:13.2px;color:#000;font-weight:normal;font-family:'Liberation Sans', sans-serif;">Start page</div><svg class="ic" style="left:343px;top:757px" width="19.0" height="17.1" viewBox="0 0 20 18"><path d="M0.5 0.5H11V4H4.5V7.5H9.5V11H4.5V17.5H0.5Z" fill="#d8141c" stroke="#8a0000" stroke-width="0.8"/><g transform="translate(13 11.5)"><circle r="4.6" fill="#3f6fc0" stroke="#1d3f78" stroke-width="0.6"/><path d="M-1.1 -6.3H1.1V6.3H-1.1Z" fill="#3f6fc0" transform="rotate(0)"/><path d="M-1.1 -6.3H1.1V6.3H-1.1Z" fill="#3f6fc0" transform="rotate(45)"/><path d="M-1.1 -6.3H1.1V6.3H-1.1Z" fill="#3f6fc0" transform="rotate(90)"/><path d="M-1.1 -6.3H1.1V6.3H-1.1Z" fill="#3f6fc0" transform="rotate(135)"/><circle r="1.8" fill="#fff"/></g></svg><svg class="ic" style="left:482px;top:758px" width="19.0" height="17.1" viewBox="0 0 20 18"><path d="M0.5 0.5H11V4H4.5V7.5H9.5V11H4.5V17.5H0.5Z" fill="#d8141c" stroke="#8a0000" stroke-width="0.8"/><g transform="translate(13 11.5)"><circle r="4.6" fill="#3f6fc0" stroke="#1d3f78" stroke-width="0.6"/><path d="M-1.1 -6.3H1.1V6.3H-1.1Z" fill="#3f6fc0" transform="rotate(0)"/><path d="M-1.1 -6.3H1.1V6.3H-1.1Z" fill="#3f6fc0" transform="rotate(45)"/><path d="M-1.1 -6.3H1.1V6.3H-1.1Z" fill="#3f6fc0" transform="rotate(90)"/><path d="M-1.1 -6.3H1.1V6.3H-1.1Z" fill="#3f6fc0" transform="rotate(135)"/><circle r="1.8" fill="#fff"/></g></svg><svg class="ic" style="left:434px;top:757.5px" width="17" height="16" viewBox="0 0 17 16"><rect x="0.5" y="0.5" width="16" height="15" fill="#d6d6d6" stroke="#b4b4b4"/><path d="M5 4.5L12 11.5M12 4.5L5 11.5" stroke="#fff" stroke-width="2.2"/></svg><svg class="ic" style="left:594.5px;top:759.5px" width="17" height="16" viewBox="0 0 17 16"><rect x="0.5" y="0.5" width="16" height="15" rx="1.5" fill="#e8643a" stroke="#c84a20"/><path d="M5 4.5L12 11.5M12 4.5L5 11.5" stroke="#fff" stroke-width="2.4"/></svg><div class="t" style="left:506.2px;top:761.09px;font-size:13.6px;line-height:13.6px;color:#000;font-weight:normal;font-family:'Liberation Sans', sans-serif;">Unnamed : 1*</div><div class="t" style="left:8px;top:792.50px;font-size:14.3px;line-height:14.3px;color:#000;font-weight:normal;font-family:'Liberation Sans', sans-serif;">(C) Create a coincident constraint on the selected item</div><div class="t" style="left:1323px;top:792.65px;font-size:14px;line-height:14px;color:#000;font-weight:normal;font-family:'Liberation Sans', sans-serif;width:41px;overflow:hidden">Gesture</div><svg class="ic" style="left:1301px;top:790px" width="20" height="20" viewBox="0 0 20 20"><path d="M5 9C5 4 9 5 13 4M15 11C15 16 11 15 7 16" fill="none" stroke="#555" stroke-width="1.8"/><circle cx="15" cy="4" r="3.2" fill="#333"/><circle cx="5" cy="16" r="3.2" fill="#333"/></svg><svg class="ic" style="left:1365.5px;top:796.0px" width="10" height="6" viewBox="0 0 10 6"><path d="M0.5 0.5H9.5L5 5.5Z" fill="#000"/></svg><div style="position:absolute;left:1385px;top:784px;width:1px;height:31px;background:#d9d9d9"></div><div class="t" style="left:1390.7px;top:792.65px;font-size:14px;line-height:14px;color:#000;font-weight:normal;font-family:'Liberation Sans', sans-serif;">382.65 mm x 182.21 mm</div></body></html>
